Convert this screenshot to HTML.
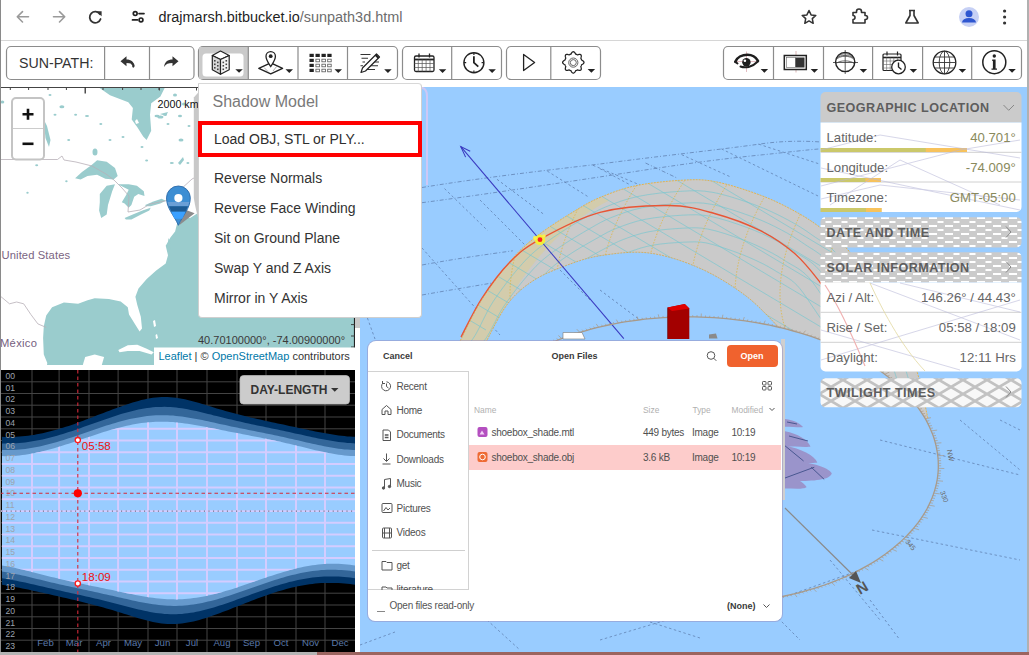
<!DOCTYPE html>
<html><head><meta charset="utf-8">
<style>
html,body{margin:0;padding:0;width:1029px;height:655px;overflow:hidden;background:#fff;font-family:"Liberation Sans",sans-serif;}
.abs{position:absolute}

</style></head><body>
<div class="abs" style="left:0;top:0;width:1029px;height:40px;background:#fff;border-bottom:1px solid #d6d6d6;"></div>
<svg class="abs" style="left:0;top:0" width="1029" height="40">
 <g fill="none" stroke="#9a9a9a" stroke-width="1.6" stroke-linecap="round" stroke-linejoin="round">
  <path d="M28.5 16.8H17.5M22.5 11.6L17.3 16.8L22.5 22"/>
  <path d="M53.5 16.8H64.5M59.5 11.6L64.7 16.8L59.5 22"/>
 </g>
 <g fill="none" stroke="#333" stroke-width="1.8" stroke-linecap="round">
  <path d="M100 14.2A5.6 5.6 0 1 0 100.6 19"/>
 </g>
 <path d="M96.5 11.2L101.6 11.2L101.6 16.2Z" fill="#333"/>
 <g fill="none" stroke="#222" stroke-width="1.7">
  <circle cx="135.2" cy="13.6" r="1.9"/>
  <path d="M139 13.6H144" stroke-linecap="round"/>
  <circle cx="141" cy="19.9" r="1.9"/>
  <path d="M132.5 19.9H137.5" stroke-linecap="round"/>
 </g>
 <text x="158.5" y="21.5" font-size="14.45" fill="#1f1f1f" font-family="Liberation Sans, sans-serif">drajmarsh.bitbucket.io<tspan fill="#6d6d6d">/sunpath3d.html</tspan></text>
 <g fill="none" stroke="#333" stroke-width="1.5" stroke-linejoin="round">
  <path d="M809 10.5L811.1 14.9L815.8 15.4L812.3 18.6L813.2 23.3L809 20.9L804.8 23.3L805.7 18.6L802.2 15.4L806.9 14.9Z"/>
 </g>
 <path d="M853 12.5H856.5V11.5A2.5 2.5 0 0 1 861.5 11.5V12.5H865V15.5H865.5A2 2 0 0 1 865.5 19.5H865V23H853V19.5A2 2 0 0 0 853 15.5Z" fill="none" stroke="#333" stroke-width="1.6" stroke-linejoin="round"/>
 <path d="M909 10.5H915M910 10.5V15.5L905.8 23H918.2L914 15.5V10.5" fill="none" stroke="#333" stroke-width="1.6" stroke-linejoin="round"/>
 <circle cx="969" cy="17" r="10" fill="#c6d0f5"/>
 <circle cx="969" cy="13.8" r="3.5" fill="#2e56d0"/>
 <path d="M962 22.5A7 4.5 0 0 1 976 22.5Z" fill="#2e56d0"/>
 <g fill="#333"><circle cx="1004.6" cy="11" r="1.6"/><circle cx="1004.6" cy="17" r="1.6"/><circle cx="1004.6" cy="23" r="1.6"/></g>
</svg>

<svg class="abs" style="left:0;top:41px" width="1029" height="46">
<g transform="translate(0,-41)">
 <g fill="#fff" stroke="#8c8c8c" stroke-width="1.2">
  <rect x="6.5" y="46.5" width="187.5" height="33" rx="4.5"/>
  <rect x="198.5" y="46.5" width="199" height="33" rx="4.5"/>
  <rect x="402.5" y="46.5" width="99" height="33" rx="4.5"/>
  <rect x="506.5" y="46.5" width="94" height="33" rx="4.5"/>
  <rect x="723.5" y="46.5" width="298" height="33" rx="4.5"/>
 </g>
 <path d="M199.1 47.1H248V79H199.1Z" fill="#cacaca"/>
 <rect x="202.5" y="53.5" width="41" height="23" rx="3.5" fill="#fff"/>
 <g stroke="#8c8c8c" stroke-width="1.2">
  <path d="M104.6 47V79M149.5 47V79M248.3 47V79M298 47V79M347.5 47V79M451.7 47V79M550.8 47V79M773.5 47V79M823.5 47V79M872.6 47V79M922.6 47V79M971.7 47V79"/>
 </g>
 <text x="19" y="67.5" font-size="14.2" fill="#333" font-family="Liberation Sans, sans-serif">SUN-PATH:</text>
 <!-- undo / redo -->
 <path d="M120.5 61.2L126.5 56.2V59.4C131 59.4 134.3 61.5 134.3 66.5C133 63.8 130.6 63.1 126.5 63.1V66.3Z" fill="#333"/>
 <path d="M133.3 66.5C133.6 65.5 133.2 64.3 132 63.6" stroke="#333" stroke-width="2.2" fill="none" stroke-linecap="round"/>
 <path d="M178.5 61.2L172.5 56.2V59.4C168 59.4 164.2 61.8 164.2 67C165.8 64 168.4 63.1 172.5 63.1V66.3Z" fill="#333"/>
 <!-- carets -->
 <g fill="#222">
  <path d="M235.3 69.2H242.8L239.05 72.8Z"/>
  <path d="M285.5 69.3H293L289.25 72.9Z"/>
  <path d="M334.5 69.3H342L338.25 72.9Z"/>
  <path d="M384.2 69.3H391.7L387.95 72.9Z"/>
  <path d="M488.4 69.3H495.9L492.15 72.9Z"/>
  <path d="M438.8 69.3H446.3L442.55 72.9Z"/>
  <path d="M587.6 69.1H595.1L591.35 72.7Z"/>
  <path d="M760.6 69.1H768.1L764.35 72.7Z"/>
  <path d="M810.6 69.1H818.1L814.35 72.7Z"/>
  <path d="M859.6 69.1H867.1L863.35 72.7Z"/>
  <path d="M909.6 69.1H917.1L913.35 72.7Z"/>
  <path d="M958.6 69.1H966.1L962.35 72.7Z"/>
  <path d="M1008.3 69.1H1015.8L1012.05 72.7Z"/>
 </g>
 <!-- building -->
 <g stroke="#222" stroke-width="1.2" stroke-linejoin="round">
  <path d="M212.3 55.5L220.5 51L229.2 55.5L220.5 59.5Z" fill="#fff"/>
  <path d="M212.3 55.5V69.8L220.5 74.2V59.5Z" fill="#d8d8d8"/>
  <path d="M229.2 55.5V69.8L220.5 74.2V59.5Z" fill="#f4f4f4"/>
 </g>
 <g fill="#444">
  <rect x="214" y="60" width="1.6" height="1.6"/><rect x="217" y="61.6" width="1.6" height="1.6"/>
  <rect x="214" y="63.5" width="1.6" height="1.6"/><rect x="217" y="65" width="1.6" height="1.6"/>
  <rect x="214" y="67" width="1.6" height="1.6"/><rect x="217" y="68.5" width="1.6" height="1.6"/>
  <rect x="222.5" y="61.6" width="1.6" height="1.6"/><rect x="225.5" y="60" width="1.6" height="1.6"/>
  <rect x="222.5" y="65" width="1.6" height="1.6"/><rect x="225.5" y="63.5" width="1.6" height="1.6"/>
  <rect x="222.5" y="68.5" width="1.6" height="1.6"/><rect x="225.5" y="67" width="1.6" height="1.6"/>
 </g>
 <!-- pin on map -->
 <path d="M258.8 68.3L270.7 62.8L282.6 68.3L270.7 73.8Z" fill="#fff" stroke="#222" stroke-width="1.4" stroke-linejoin="round"/>
 <path d="M264 67.5L268 71.5M277 66L273 71" stroke="#999" stroke-width="0.8"/>
 <path d="M270.7 66.5C268 62.5 266 60 266 56.3A4.7 4.7 0 0 1 275.4 56.3C275.4 60 273.4 62.5 270.7 66.5Z" fill="#fff" stroke="#222" stroke-width="1.3"/>
 <circle cx="270.7" cy="56.2" r="1.9" fill="#222"/>
 <!-- grid -->
 <g fill="#222">
  <rect x="309.5" y="53.8" width="4.3" height="3.2"/><rect x="315.5" y="53.8" width="4.3" height="3.2"/><rect x="321.5" y="53.8" width="4.3" height="3.2"/><rect x="327.3" y="53.8" width="4.3" height="3.2"/>
  <rect x="309.5" y="58.8" width="4.3" height="3.2"/><rect x="309.5" y="63.8" width="4.3" height="3.2"/><rect x="309.5" y="68.8" width="4.3" height="3.2"/>
 </g>
 <g fill="none" stroke="#555" stroke-width="0.8">
  <rect x="315.9" y="59.2" width="3.5" height="2.6"/><rect x="321.9" y="59.2" width="3.5" height="2.6"/><rect x="327.7" y="59.2" width="3.5" height="2.6"/>
  <rect x="315.9" y="64.2" width="3.5" height="2.6"/><rect x="321.9" y="64.2" width="3.5" height="2.6"/><rect x="327.7" y="64.2" width="3.5" height="2.6"/>
  <rect x="315.9" y="69.2" width="3.5" height="2.6"/><rect x="321.9" y="69.2" width="3.5" height="2.6"/><rect x="327.7" y="69.2" width="3.5" height="2.6"/>
 </g>
 <!-- pencil -->
 <g stroke="#333" stroke-width="1.1">
  <path d="M360.5 54.5H370.5M361.5 58.2H368M362.5 62H365M371 62H379M360.5 65.8H363M369 65.8H378M367 69.5H375"/>
 </g>
 <path d="M361 72.5L362.5 68L376.5 54L379.5 57L365.5 71Z" fill="#fff" stroke="#222" stroke-width="1.2" stroke-linejoin="round"/>
 <path d="M375.5 55L378.5 58" stroke="#222" stroke-width="1.8"/>
 <!-- calendar -->
 <rect x="414.5" y="56" width="19.5" height="15.5" rx="1.5" fill="#fff" stroke="#222" stroke-width="1.3"/>
 <path d="M414.5 59.5H434" stroke="#222" stroke-width="1.8"/>
 <g stroke="#555" stroke-width="0.7"><path d="M414.5 63.5H434M414.5 67.5H434M418.3 59.5V71.5M422.2 59.5V71.5M426.1 59.5V71.5M430 59.5V71.5"/></g>
 <path d="M419 53.5V57.5M429.5 53.5V57.5" stroke="#222" stroke-width="1.3"/>
 <!-- clock -->
 <circle cx="473.9" cy="62.7" r="10" fill="#fff" stroke="#222" stroke-width="1.4"/>
 <path d="M473.9 52.7V55M473.9 70.4V72.7M463.9 62.7H466.2M481.6 62.7H483.9" stroke="#222" stroke-width="1.2"/>
 <path d="M473.9 56.3V62.7L478.3 66.6" stroke="#222" stroke-width="1.8" fill="none"/>
 <!-- play -->
 <path d="M523.6 54.5V70.5L534.6 62.5Z" fill="#fff" stroke="#222" stroke-width="1.3" stroke-linejoin="round"/>
 <!-- gear -->
 <path d="M573.30 51.70 L573.72 51.77 L574.12 51.98 L574.49 52.31 L574.83 52.72 L575.13 53.18 L575.40 53.65 L575.64 54.09 L575.96 54.20 L576.28 54.31 L576.60 54.44 L576.91 54.57 L577.21 54.72 L577.52 54.87 L578.00 54.73 L578.52 54.58 L579.06 54.47 L579.59 54.42 L580.09 54.45 L580.52 54.59 L580.87 54.83 L581.11 55.18 L581.25 55.61 L581.28 56.11 L581.23 56.64 L581.12 57.18 L580.97 57.70 L580.83 58.18 L580.98 58.49 L581.13 58.79 L581.26 59.10 L581.39 59.42 L581.50 59.74 L581.61 60.06 L582.05 60.30 L582.52 60.57 L582.98 60.87 L583.39 61.21 L583.72 61.58 L583.93 61.98 L584.00 62.40 L583.93 62.82 L583.72 63.22 L583.39 63.59 L582.98 63.93 L582.52 64.23 L582.05 64.50 L581.61 64.74 L581.50 65.06 L581.39 65.38 L581.26 65.70 L581.13 66.01 L580.98 66.31 L580.83 66.62 L580.97 67.10 L581.12 67.62 L581.23 68.16 L581.28 68.69 L581.25 69.19 L581.11 69.62 L580.87 69.97 L580.52 70.21 L580.09 70.35 L579.59 70.38 L579.06 70.33 L578.52 70.22 L578.00 70.07 L577.52 69.93 L577.21 70.08 L576.91 70.23 L576.60 70.36 L576.28 70.49 L575.96 70.60 L575.64 70.71 L575.40 71.15 L575.13 71.62 L574.83 72.08 L574.49 72.49 L574.12 72.82 L573.72 73.03 L573.30 73.10 L572.88 73.03 L572.48 72.82 L572.11 72.49 L571.77 72.08 L571.47 71.62 L571.20 71.15 L570.96 70.71 L570.64 70.60 L570.32 70.49 L570.00 70.36 L569.69 70.23 L569.39 70.08 L569.08 69.93 L568.60 70.07 L568.08 70.22 L567.54 70.33 L567.01 70.38 L566.51 70.35 L566.08 70.21 L565.73 69.97 L565.49 69.62 L565.35 69.19 L565.32 68.69 L565.37 68.16 L565.48 67.62 L565.63 67.10 L565.77 66.62 L565.62 66.31 L565.47 66.01 L565.34 65.70 L565.21 65.38 L565.10 65.06 L564.99 64.74 L564.55 64.50 L564.08 64.23 L563.62 63.93 L563.21 63.59 L562.88 63.22 L562.67 62.82 L562.60 62.40 L562.67 61.98 L562.88 61.58 L563.21 61.21 L563.62 60.87 L564.08 60.57 L564.55 60.30 L564.99 60.06 L565.10 59.74 L565.21 59.42 L565.34 59.10 L565.47 58.79 L565.62 58.49 L565.77 58.18 L565.63 57.70 L565.48 57.18 L565.37 56.64 L565.32 56.11 L565.35 55.61 L565.49 55.18 L565.73 54.83 L566.08 54.59 L566.51 54.45 L567.01 54.42 L567.54 54.47 L568.08 54.58 L568.60 54.73 L569.08 54.87 L569.39 54.72 L569.69 54.57 L570.00 54.44 L570.32 54.31 L570.64 54.20 L570.96 54.09 L571.20 53.65 L571.47 53.18 L571.77 52.72 L572.11 52.31 L572.48 51.98 L572.88 51.77Z" fill="#fff" stroke="#222" stroke-width="1.25" stroke-linejoin="round"/>
 <circle cx="573.3" cy="62.6" r="4.6" fill="none" stroke="#555" stroke-width="0.9"/>
 <circle cx="573.3" cy="62.6" r="3" fill="none" stroke="#555" stroke-width="0.9"/>
 <!-- eye -->
 <path d="M746.5 51.5V72M734.5 61.5H758" stroke="#d9a0a8" stroke-width="0.7"/>
 <path d="M735.3 61.8C737 57.5 742 54.8 747.5 54.8C752.5 54.8 756 57.5 758 60.8" fill="none" stroke="#1e1e1e" stroke-width="2.6" stroke-linecap="round"/>
 <path d="M740.5 66.5C745 68.3 752 67.5 757.8 61.5" fill="none" stroke="#1e1e1e" stroke-width="2" stroke-linecap="round"/>
 <path d="M735.3 61.8L737.5 63.5" stroke="#1e1e1e" stroke-width="2" stroke-linecap="round"/>
 <circle cx="746.4" cy="62.3" r="4.2" fill="#1e1e1e"/>
 <circle cx="744.9" cy="60.8" r="1.3" fill="#fff"/>
 <!-- split rect -->
 <path d="M796 51V72.5" stroke="#c99" stroke-width="0.7"/>
 <rect x="784.3" y="55.5" width="22" height="14" fill="#fff" stroke="#222" stroke-width="1.5"/>
 <rect x="786.5" y="57.5" width="9" height="10" fill="#fff" stroke="#666" stroke-width="0.6"/>
 <rect x="795.5" y="57.5" width="9" height="10" fill="#333"/>
 <!-- sphere -->
 <path d="M845.2 50V74M833 62.5H858" stroke="#333" stroke-width="0.8"/>
 <circle cx="845.2" cy="62" r="9.6" fill="none" stroke="#222" stroke-width="1.4"/>
 <path d="M836 60C839 55 851 55 854.5 60M837 58C840 54.5 850 54.5 853.5 58M836.5 63.5C839 60 851 60 854 63.5M838 56C842 53 848 53 852 56" fill="none" stroke="#444" stroke-width="0.8"/>
 <!-- calendar clock -->
 <rect x="883" y="54" width="18" height="16.5" rx="1" fill="#fff" stroke="#222" stroke-width="1.2"/>
 <path d="M883 57.5H901" stroke="#222" stroke-width="1.6"/>
 <g stroke="#666" stroke-width="0.6"><path d="M883 61H901M883 64.5H901M883 68H901M886.6 57.5V70.5M890.2 57.5V70.5M893.8 57.5V70.5M897.4 57.5V70.5"/></g>
 <path d="M887 51.5V55.5M897.5 51.5V55.5" stroke="#222" stroke-width="1.2"/>
 <circle cx="898.5" cy="67" r="6.8" fill="#fff" stroke="#222" stroke-width="1.3"/>
 <path d="M898.5 62.5V67L901.5 69.5" stroke="#222" stroke-width="1.4" fill="none"/>
 <!-- globe -->
 <circle cx="944.5" cy="62.5" r="11.3" fill="#fff" stroke="#222" stroke-width="1.3"/>
 <ellipse cx="944.5" cy="62.5" rx="5.3" ry="11.3" fill="none" stroke="#333" stroke-width="0.9"/>
 <path d="M944.5 51.2V73.8M933.2 62.5H955.8M934.5 57H954.5M934.5 68H954.5" stroke="#333" stroke-width="0.9"/>
 <!-- info -->
 <circle cx="994.3" cy="62.2" r="11.5" fill="#fff" stroke="#222" stroke-width="1.5"/>
 <circle cx="994.3" cy="56" r="1.7" fill="#222"/>
 <path d="M992.2 59.5H995.6V68.4H997V69.8H991.5V68.4H992.9V60.9H992.2Z" fill="#222"/>
</g>
</svg>

<svg class="abs" style="left:0;top:0" width="360" height="368">
 <rect x="1" y="87" width="354" height="278" fill="#fff"/>
 <g fill="#9acccd">
  <!-- Atlantic + Gulf -->
  <path d="M179.9 215L177.5 222.1L175.1 231.6L170.4 237.5L165.7 245.8L168 255.2L165.7 263.5L156.2 270.6L146.7 278.9L138.5 288.4L135.4 296.7L137.3 304.9L140.8 316.8L142 328.6L139.6 331.4L134.9 323.9L129 314.4L127.8 307.3L120.7 301.4L108.9 299L94.7 298.3L87.6 300.2L78.1 303.8L63.9 302.6L52.1 307.3L46.2 315.6L43.8 326.2L43.1 338L43.8 354.6L47.3 362.9L47 365H355V200L198 200L198 213L190 218L183 216Z"/>
  <!-- Hudson/James Bay -->
  <path d="M98.5 87.3L110 95.3L128.3 102.2L132.9 107.9L131.7 119.4L137.5 127.4L143.2 136.5L146.6 140L151.2 130.8L150 114.8L151.2 103.3L160.4 96.5L165 87.3Z"/>
  <!-- Superior -->
  <path d="M75.1 178.2L82 172L91.6 165.1L97.1 160.3L106.7 161.7L115 167.9L117.7 176.1L113.6 179.5L105.3 178.8L97.1 174.7L87.5 176.1L80.6 179.5Z"/>
  <!-- Michigan -->
  <path d="M99.8 194L106.7 185.7L115 184.3L112.2 191.2L108 205L106.7 214.6L101.2 218L99.1 210.4L99.8 202.2Z"/>
  <!-- Huron -->
  <path d="M117.7 184.3L128.7 184.3L136.9 185.7L143.8 191.2L144.5 196L138.3 194L134.2 196.7L131.4 205L128.7 207.7L124.6 203.6L121.8 202.2L126 195.3L128.7 189.8L123.2 187.1Z"/>
  <!-- Erie -->
  <path d="M124.6 218L132.8 214.6L142.4 210.4L150.7 207.7L149.3 210.4L141 214.6L131.4 219.4L125.9 219.4Z"/>
  <!-- Ontario -->
  <path d="M145.2 204.9L153.4 201.5L161.6 198.8L165.8 200.8L160.3 203.6L150.7 206.3L145.9 206.3Z"/>
  <path d="M168.5 238L171 244L169.5 252L167.5 247Z"/><ellipse cx="95" cy="152" rx="2.5" ry="3.5"/><ellipse cx="2.3" cy="102" rx="2" ry="1.5"/><ellipse cx="61.9" cy="106.8" rx="2.5" ry="1.5"/><ellipse cx="55" cy="114.8" rx="1.5" ry="1"/><ellipse cx="87" cy="116" rx="2" ry="1"/><ellipse cx="100.8" cy="124" rx="1.5" ry="1"/><ellipse cx="75.6" cy="114.8" rx="1.5" ry="1"/><ellipse cx="160.4" cy="117" rx="3" ry="1.5"/><ellipse cx="165" cy="114.8" rx="2" ry="1"/><ellipse cx="181" cy="140" rx="2.5" ry="1.5"/><ellipse cx="146.6" cy="160.6" rx="1.5" ry="1"/><ellipse cx="171.8" cy="162.9" rx="2" ry="1"/><ellipse cx="187.9" cy="162.9" rx="1.5" ry="1"/><ellipse cx="142" cy="146.9" rx="1.5" ry="1"/><ellipse cx="68.7" cy="140" rx="1.5" ry="1"/><ellipse cx="36.7" cy="165.2" rx="1.5" ry="1"/><ellipse cx="66.4" cy="181.2" rx="1.2" ry="1"/><ellipse cx="27.5" cy="192.7" rx="1.2" ry="1"/><ellipse cx="175" cy="95" rx="2" ry="1.5"/><ellipse cx="184" cy="104" rx="2" ry="1.5"/><ellipse cx="180" cy="116" rx="2" ry="1.2"/><ellipse cx="157" cy="116" rx="2.5" ry="1.2"/><ellipse cx="168" cy="124" rx="1.5" ry="1"/><ellipse cx="189" cy="126" rx="1.5" ry="1"/><ellipse cx="123" cy="137" rx="1.5" ry="1"/><ellipse cx="110" cy="140" rx="1.5" ry="1"/><ellipse cx="50" cy="95" rx="1.5" ry="1"/><ellipse cx="30" cy="100" rx="1" ry="1"/>
  <path d="M43.5 119L47 126L50.5 140L49 147L45.5 138Z"/>
  <path d="M178 163L183 157L184 160L180 165Z"/>
  <path d="M160 114L168 112L166 116Z"/>
 </g>
 <g fill="#fff">
  <path d="M82.8 365L85.2 357L94.7 354.6L104.1 357L101.8 365Z"/>
  <path d="M118.3 349.9L127.8 345.2L137.3 344.7L146.7 348.7L153.8 352.3L151.5 354.6L139.6 351.1L127.8 351.1L119.5 352.3Z"/>
  <path d="M135 121L137 119L139 123L136 124Z"/>
  <path d="M153 321L155 320L156 326L154 327Z"/><path d="M155.5 335L157 334L158 338L156 339Z"/>
 </g>
 <g fill="none" stroke="#b8b0b8" stroke-width="0.8">
  <path d="M1 159.5H57.5L62 156L64 160L76 162L92 166L106 174L114 180L122 188L129 196L128 212L140 210L150 204L165.8 200.8L180 190L192 179L198 176"/>
  <path d="M1 296.7L9.5 303.8L16.6 302L23.7 303.8L30.8 314.4L37.9 323.9L46.2 327.4"/>
 </g>
 <!-- top ruler -->
 <path d="M1 87.5H355" stroke="#444" stroke-width="1"/>
 <path d="M10.3 87.5V90M28.6 87.5V90M48 87.5V90M66.4 87.5V90M103 87.5V90M122.6 87.5V90M141 87.5V90M159 87.5V90M159.4 87.5V90.5M196.5 87.5V90.5" stroke="#444" stroke-width="1"/>
 <path d="M85.2 87.5V93.5" stroke="#222" stroke-width="1.2"/>
 <!-- right ruler -->
 <path d="M354.5 318V348" stroke="#222" stroke-width="1.2"/>
 <path d="M354.5 348V365" stroke="#c4c4c4" stroke-width="1"/>
 <path d="M351 324.6H355M351 336H355M351 347H355M351 357.7H355" stroke="#333" stroke-width="0.9"/>
 
 <!-- zoom control -->
 <rect x="12" y="98" width="32" height="61.5" rx="4" fill="#fff" stroke="#c4c4c4" stroke-width="2"/>
 <path d="M13 128.5H43" stroke="#ccc" stroke-width="1"/>
 <path d="M22.5 114.2H33.5M28 108.7V119.7" stroke="#111" stroke-width="2.6"/>
 <path d="M22.5 143.8H33.5" stroke="#111" stroke-width="2.6"/>
 <!-- labels -->
 <text x="1.5" y="258.5" font-size="11.2" fill="#7a6482" letter-spacing="0.12" font-family="Liberation Sans, sans-serif">United States</text>
 <text x="0" y="346.5" font-size="11.2" fill="#74607e" letter-spacing="0.3" font-family="Liberation Sans, sans-serif">México</text>
 <!-- marker -->
 <path d="M183.6 209L194.6 213.2L179.5 224.9Z" fill="#8c8c8c"/>
 <path d="M178.4 225.3C174 215 166.5 208.5 166.5 197.9A11.9 11.9 0 0 1 190.3 197.9C190.3 208.5 182.8 215 178.4 225.3Z" fill="#3d8ed3" stroke="#2d6aa8" stroke-width="0.9"/>
 <path d="M167.6 202H189.2L188 206.3H169Z" fill="#6a9fd6"/>
 <path d="M169 206.3H188L185.5 211.8H171.4Z" fill="#1d5b94"/>
 <path d="M171.4 211.8H185.5L182.3 218.7H174.5Z" fill="#3aa0ff"/>
 <circle cx="178.4" cy="198.1" r="4.1" fill="#fff"/>
 <!-- coords -->
 <text x="198" y="343.5" font-size="11" fill="#3a3a3a" stroke="#fff" stroke-width="0" font-family="Liberation Sans, sans-serif">40.70100000°, -74.00900000°</text>
 <rect x="154" y="347.5" width="201" height="18" fill="#fff"/>
 <text x="158.5" y="360" font-size="11" fill="#333" font-family="Liberation Sans, sans-serif"><tspan fill="#0078a8">Leaflet</tspan> | © <tspan fill="#0078a8">OpenStreetMap</tspan> contributors</text>
 <path d="M198.7 92V220C197 214 195 206 193.8 198V97.4Z" fill="#c8c8c8"/>
 <text x="157.6" y="107.5" font-size="10.7" fill="#111" font-family="Liberation Sans, sans-serif">2000 km</text>
</svg>

<svg width="357" height="285" style="position:absolute;left:0;top:368px">
<rect x="1" y="2" width="355" height="283" fill="#000"/>
<path d="M0 13.8H356M0 25.5H356M0 37.2H356M0 49.0H356M0 60.8H356M0 72.5H356M0 84.2H356M0 96.0H356M0 107.8H356M0 119.5H356M0 131.2H356M0 143.0H356M0 154.8H356M0 166.5H356M0 178.2H356M0 190.0H356M0 201.8H356M0 213.5H356M0 225.2H356M0 237.0H356M0 248.8H356M0 260.5H356M0 272.2H356M32.0 2V285M59.1 2V285M89.0 2V285M118.1 2V285M148.0 2V285M177.0 2V285M207.0 2V285M237.0 2V285M266.0 2V285M296.0 2V285M325.0 2V285" stroke="#444" stroke-width="1" fill="none"/>
<polygon points="2.0,68.8 4.9,68.9 7.8,69.0 10.7,69.0 13.6,68.9 16.5,68.8 19.4,68.6 22.3,68.3 25.2,68.0 28.1,67.7 31.0,67.3 33.9,66.9 36.8,66.3 39.7,65.8 42.6,65.2 45.5,64.5 48.4,63.8 51.3,63.1 54.2,62.3 57.1,61.5 60.0,60.6 62.9,59.7 65.8,58.8 68.7,57.9 71.6,56.9 74.5,55.9 77.4,54.8 80.3,53.8 83.2,52.7 86.1,51.6 89.0,50.5 91.9,49.4 94.8,48.3 97.7,47.1 100.6,46.0 103.5,44.9 106.4,43.8 109.4,42.7 112.3,41.6 115.2,40.5 118.1,39.4 121.0,38.4 123.9,37.4 126.8,36.4 129.7,35.4 132.6,34.5 135.5,33.7 138.4,32.9 141.3,32.1 144.2,31.4 147.1,30.8 150.0,30.3 152.9,29.8 155.8,29.5 158.7,29.2 161.6,29.1 164.5,29.0 167.4,29.0 170.3,29.2 173.2,29.4 176.1,29.8 179.0,30.2 181.9,30.7 184.8,31.3 187.7,32.0 190.6,32.7 193.5,33.4 196.4,34.3 199.3,35.1 202.2,36.0 205.1,36.8 208.0,37.7 210.9,38.6 213.8,39.5 216.7,40.4 219.6,41.2 222.5,42.1 225.4,42.9 228.3,43.7 231.2,44.5 234.1,45.3 237.0,46.1 239.9,46.8 242.8,47.6 245.7,48.3 248.6,49.0 251.5,49.7 254.4,50.3 257.3,51.0 260.2,51.6 263.1,52.3 266.0,52.9 268.9,53.5 271.8,54.2 274.7,54.8 277.6,55.4 280.5,56.0 283.4,56.6 286.3,57.3 289.2,57.9 292.1,58.5 295.0,59.1 297.9,59.8 300.8,60.4 303.7,61.0 306.6,61.6 309.5,62.2 312.4,62.8 315.3,63.4 318.2,64.0 321.2,64.6 324.1,65.1 327.0,65.6 329.9,66.1 332.8,66.6 335.7,67.0 338.6,67.4 341.5,67.8 344.4,68.1 347.3,68.4 350.2,68.6 353.1,68.8 355.0,68.8 355.0,216.7 353.1,216.5 350.2,216.1 347.3,215.8 344.4,215.5 341.5,215.3 338.6,215.1 335.7,215.0 332.8,214.9 329.9,214.9 327.0,214.9 324.1,215.0 321.2,215.1 318.2,215.3 315.3,215.6 312.4,215.9 309.5,216.3 306.6,216.7 303.7,217.2 300.8,217.7 297.9,218.3 295.0,218.9 292.1,219.6 289.2,220.3 286.3,221.1 283.4,221.9 280.5,222.7 277.6,223.6 274.7,224.5 271.8,225.5 268.9,226.4 266.0,227.4 263.1,228.5 260.2,229.5 257.3,230.6 254.4,231.7 251.5,232.8 248.6,233.9 245.7,235.1 242.8,236.2 239.9,237.4 237.0,238.5 234.1,239.6 231.2,240.8 228.3,241.9 225.4,243.0 222.5,244.1 219.6,245.2 216.7,246.3 213.8,247.3 210.9,248.3 208.0,249.3 205.1,250.2 202.2,251.1 199.3,251.9 196.4,252.7 193.5,253.4 190.6,254.0 187.7,254.6 184.8,255.1 181.9,255.5 179.0,255.8 176.1,256.0 173.2,256.1 170.3,256.0 167.4,255.9 164.5,255.7 161.6,255.4 158.7,255.0 155.8,254.5 152.9,253.9 150.0,253.3 147.1,252.6 144.2,251.8 141.3,251.0 138.4,250.2 135.5,249.3 132.6,248.4 129.7,247.5 126.8,246.6 123.9,245.7 121.0,244.8 118.1,243.9 115.2,243.0 112.3,242.1 109.4,241.2 106.4,240.4 103.5,239.6 100.6,238.7 97.7,237.9 94.8,237.2 91.9,236.4 89.0,235.7 86.1,234.9 83.2,234.2 80.3,233.5 77.4,232.8 74.5,232.1 71.6,231.5 68.7,230.8 65.8,230.1 62.9,229.5 60.0,228.8 57.1,228.1 54.2,227.5 51.3,226.8 48.4,226.1 45.5,225.5 42.6,224.8 39.7,224.2 36.8,223.5 33.9,222.9 31.0,222.2 28.1,221.6 25.2,221.0 22.3,220.4 19.4,219.8 16.5,219.2 13.6,218.7 10.7,218.1 7.8,217.6 4.9,217.2 2.0,216.7" fill="#003366"/>
<polygon points="2.0,75.4 4.9,75.4 7.8,75.5 10.7,75.4 13.6,75.3 16.5,75.2 19.4,75.0 22.3,74.7 25.2,74.4 28.1,74.0 31.0,73.6 33.9,73.1 36.8,72.6 39.7,72.0 42.6,71.4 45.5,70.8 48.4,70.1 51.3,69.3 54.2,68.5 57.1,67.7 60.0,66.8 62.9,66.0 65.8,65.1 68.7,64.1 71.6,63.2 74.5,62.2 77.4,61.2 80.3,60.2 83.2,59.1 86.1,58.1 89.0,57.1 91.9,56.0 94.8,55.0 97.7,53.9 100.6,52.9 103.5,51.9 106.4,50.9 109.4,49.9 112.3,48.9 115.2,48.0 118.1,47.0 121.0,46.1 123.9,45.3 126.8,44.5 129.7,43.7 132.6,42.9 135.5,42.2 138.4,41.6 141.3,41.0 144.2,40.5 147.1,40.1 150.0,39.7 152.9,39.3 155.8,39.1 158.7,38.9 161.6,38.9 164.5,38.8 167.4,38.9 170.3,39.0 173.2,39.3 176.1,39.5 179.0,39.9 181.9,40.3 184.8,40.8 187.7,41.3 190.6,41.9 193.5,42.5 196.4,43.1 199.3,43.8 202.2,44.5 205.1,45.2 208.0,45.9 210.9,46.6 213.8,47.4 216.7,48.1 219.6,48.8 222.5,49.5 225.4,50.2 228.3,50.9 231.2,51.6 234.1,52.3 237.0,53.0 239.9,53.6 242.8,54.3 245.7,54.9 248.6,55.5 251.5,56.2 254.4,56.8 257.3,57.4 260.2,58.0 263.1,58.6 266.0,59.2 268.9,59.8 271.8,60.4 274.7,61.0 277.6,61.6 280.5,62.2 283.4,62.8 286.3,63.5 289.2,64.1 292.1,64.7 295.0,65.4 297.9,66.0 300.8,66.6 303.7,67.3 306.6,67.9 309.5,68.6 312.4,69.2 315.3,69.8 318.2,70.4 321.2,71.0 324.1,71.6 327.0,72.1 329.9,72.6 332.8,73.1 335.7,73.5 338.6,73.9 341.5,74.3 344.4,74.6 347.3,74.9 350.2,75.1 353.1,75.3 355.0,75.4 355.0,210.2 353.1,210.0 350.2,209.6 347.3,209.3 344.4,209.0 341.5,208.8 338.6,208.6 335.7,208.5 332.8,208.4 329.9,208.4 327.0,208.5 324.1,208.6 321.2,208.7 318.2,208.9 315.3,209.2 312.4,209.6 309.5,210.0 306.6,210.4 303.7,210.9 300.8,211.4 297.9,212.0 295.0,212.7 292.1,213.4 289.2,214.1 286.3,214.9 283.4,215.7 280.5,216.5 277.6,217.4 274.7,218.3 271.8,219.2 268.9,220.2 266.0,221.2 263.1,222.2 260.2,223.2 257.3,224.2 254.4,225.3 251.5,226.3 248.6,227.4 245.7,228.4 242.8,229.5 239.9,230.6 237.0,231.6 234.1,232.7 231.2,233.7 228.3,234.7 225.4,235.7 222.5,236.7 219.6,237.6 216.7,238.5 213.8,239.4 210.9,240.3 208.0,241.1 205.1,241.8 202.2,242.5 199.3,243.2 196.4,243.8 193.5,244.4 190.6,244.8 187.7,245.3 184.8,245.6 181.9,245.9 179.0,246.1 176.1,246.2 173.2,246.2 170.3,246.2 167.4,246.1 164.5,245.9 161.6,245.6 158.7,245.3 155.8,244.9 152.9,244.4 150.0,243.9 147.1,243.3 144.2,242.7 141.3,242.1 138.4,241.4 135.5,240.7 132.6,240.0 129.7,239.2 126.8,238.5 123.9,237.7 121.0,237.0 118.1,236.2 115.2,235.5 112.3,234.7 109.4,234.0 106.4,233.3 103.5,232.5 100.6,231.8 97.7,231.1 94.8,230.4 91.9,229.8 89.0,229.1 86.1,228.4 83.2,227.8 80.3,227.1 77.4,226.5 74.5,225.8 71.6,225.2 68.7,224.5 65.8,223.9 62.9,223.2 60.0,222.6 57.1,221.9 54.2,221.3 51.3,220.6 48.4,219.9 45.5,219.3 42.6,218.6 39.7,217.9 36.8,217.3 33.9,216.6 31.0,215.9 28.1,215.3 25.2,214.6 22.3,214.0 19.4,213.4 16.5,212.8 13.6,212.2 10.7,211.7 7.8,211.2 4.9,210.7 2.0,210.2" fill="#336699"/>
<polygon points="2.0,82.1 4.9,82.1 7.8,82.1 10.7,82.1 13.6,82.0 16.5,81.8 19.4,81.6 22.3,81.3 25.2,80.9 28.1,80.5 31.0,80.0 33.9,79.5 36.8,79.0 39.7,78.4 42.6,77.7 45.5,77.0 48.4,76.3 51.3,75.6 54.2,74.7 57.1,73.9 60.0,73.1 62.9,72.2 65.8,71.3 68.7,70.3 71.6,69.4 74.5,68.4 77.4,67.4 80.3,66.4 83.2,65.4 86.1,64.4 89.0,63.4 91.9,62.5 94.8,61.5 97.7,60.5 100.6,59.5 103.5,58.6 106.4,57.6 109.4,56.7 112.3,55.8 115.2,54.9 118.1,54.1 121.0,53.3 123.9,52.5 126.8,51.8 129.7,51.1 132.6,50.5 135.5,49.9 138.4,49.4 141.3,48.9 144.2,48.4 147.1,48.1 150.0,47.8 152.9,47.5 155.8,47.3 158.7,47.2 161.6,47.2 164.5,47.2 167.4,47.3 170.3,47.4 173.2,47.6 176.1,47.9 179.0,48.2 181.9,48.5 184.8,48.9 187.7,49.4 190.6,49.9 193.5,50.4 196.4,50.9 199.3,51.5 202.2,52.1 205.1,52.7 208.0,53.3 210.9,54.0 213.8,54.6 216.7,55.2 219.6,55.9 222.5,56.5 225.4,57.1 228.3,57.7 231.2,58.4 234.1,59.0 237.0,59.6 239.9,60.2 242.8,60.8 245.7,61.3 248.6,61.9 251.5,62.5 254.4,63.1 257.3,63.7 260.2,64.2 263.1,64.8 266.0,65.4 268.9,66.0 271.8,66.6 274.7,67.2 277.6,67.8 280.5,68.4 283.4,69.1 286.3,69.7 289.2,70.4 292.1,71.0 295.0,71.7 297.9,72.3 300.8,73.0 303.7,73.7 306.6,74.4 309.5,75.0 312.4,75.7 315.3,76.3 318.2,77.0 321.2,77.6 324.1,78.2 327.0,78.8 329.9,79.3 332.8,79.8 335.7,80.2 338.6,80.7 341.5,81.0 344.4,81.4 347.3,81.6 350.2,81.8 353.1,82.0 355.0,82.1 355.0,203.5 353.1,203.2 350.2,202.8 347.3,202.5 344.4,202.2 341.5,202.0 338.6,201.9 335.7,201.7 332.8,201.7 329.9,201.7 327.0,201.8 324.1,201.9 321.2,202.1 318.2,202.4 315.3,202.7 312.4,203.1 309.5,203.5 306.6,204.0 303.7,204.5 300.8,205.1 297.9,205.7 295.0,206.4 292.1,207.1 289.2,207.8 286.3,208.6 283.4,209.4 280.5,210.3 277.6,211.2 274.7,212.1 271.8,213.0 268.9,214.0 266.0,214.9 263.1,215.9 260.2,216.9 257.3,217.9 254.4,219.0 251.5,220.0 248.6,221.0 245.7,222.0 242.8,223.0 239.9,224.0 237.0,225.0 234.1,226.0 231.2,227.0 228.3,227.9 225.4,228.8 222.5,229.7 219.6,230.6 216.7,231.4 213.8,232.2 210.9,232.9 208.0,233.6 205.1,234.3 202.2,234.9 199.3,235.5 196.4,236.0 193.5,236.4 190.6,236.8 187.7,237.2 184.8,237.4 181.9,237.7 179.0,237.8 176.1,237.9 173.2,237.9 170.3,237.8 167.4,237.7 164.5,237.5 161.6,237.3 158.7,237.0 155.8,236.6 152.9,236.2 150.0,235.8 147.1,235.3 144.2,234.8 141.3,234.2 138.4,233.7 135.5,233.0 132.6,232.4 129.7,231.8 126.8,231.1 123.9,230.5 121.0,229.8 118.1,229.2 115.2,228.5 112.3,227.8 109.4,227.2 106.4,226.5 103.5,225.9 100.6,225.2 97.7,224.6 94.8,224.0 91.9,223.3 89.0,222.7 86.1,222.1 83.2,221.5 80.3,220.8 77.4,220.2 74.5,219.6 71.6,219.0 68.7,218.3 65.8,217.7 62.9,217.0 60.0,216.4 57.1,215.7 54.2,215.0 51.3,214.4 48.4,213.7 45.5,213.0 42.6,212.3 39.7,211.6 36.8,210.9 33.9,210.2 31.0,209.5 28.1,208.8 25.2,208.1 22.3,207.5 19.4,206.8 16.5,206.2 13.6,205.6 10.7,205.0 7.8,204.5 4.9,204.0 2.0,203.5" fill="#6699cc"/>
<polygon points="2.0,88.1 4.9,88.2 7.8,88.1 10.7,88.0 13.6,87.9 16.5,87.7 19.4,87.4 22.3,87.1 25.2,86.7 28.1,86.2 31.0,85.7 33.9,85.2 36.8,84.6 39.7,84.0 42.6,83.3 45.5,82.6 48.4,81.8 51.3,81.0 54.2,80.2 57.1,79.3 60.0,78.4 62.9,77.5 65.8,76.6 68.7,75.7 71.6,74.7 74.5,73.7 77.4,72.8 80.3,71.8 83.2,70.8 86.1,69.8 89.0,68.9 91.9,67.9 94.8,66.9 97.7,66.0 100.6,65.0 103.5,64.1 106.4,63.2 109.4,62.3 112.3,61.5 115.2,60.7 118.1,59.9 121.0,59.2 123.9,58.4 126.8,57.8 129.7,57.2 132.6,56.6 135.5,56.0 138.4,55.6 141.3,55.1 144.2,54.8 147.1,54.4 150.0,54.2 152.9,54.0 155.8,53.8 158.7,53.7 161.6,53.7 164.5,53.7 167.4,53.8 170.3,53.9 173.2,54.1 176.1,54.4 179.0,54.7 181.9,55.0 184.8,55.4 187.7,55.8 190.6,56.2 193.5,56.7 196.4,57.2 199.3,57.7 202.2,58.2 205.1,58.8 208.0,59.4 210.9,59.9 213.8,60.5 216.7,61.1 219.6,61.7 222.5,62.2 225.4,62.8 228.3,63.4 231.2,64.0 234.1,64.5 237.0,65.1 239.9,65.6 242.8,66.2 245.7,66.8 248.6,67.3 251.5,67.9 254.4,68.4 257.3,69.0 260.2,69.6 263.1,70.2 266.0,70.7 268.9,71.3 271.8,71.9 274.7,72.6 277.6,73.2 280.5,73.8 283.4,74.5 286.3,75.2 289.2,75.8 292.1,76.5 295.0,77.2 297.9,77.9 300.8,78.6 303.7,79.3 306.6,80.1 309.5,80.8 312.4,81.5 315.3,82.2 318.2,82.8 321.2,83.5 324.1,84.1 327.0,84.7 329.9,85.3 332.8,85.8 335.7,86.3 338.6,86.7 341.5,87.1 344.4,87.4 347.3,87.7 350.2,87.9 353.1,88.1 355.0,88.1 355.0,197.5 353.1,197.2 350.2,196.8 347.3,196.4 344.4,196.2 341.5,196.0 338.6,195.8 335.7,195.7 332.8,195.7 329.9,195.7 327.0,195.8 324.1,196.0 321.2,196.2 318.2,196.5 315.3,196.9 312.4,197.3 309.5,197.8 306.6,198.3 303.7,198.8 300.8,199.5 297.9,200.1 295.0,200.8 292.1,201.6 289.2,202.3 286.3,203.2 283.4,204.0 280.5,204.9 277.6,205.8 274.7,206.7 271.8,207.7 268.9,208.6 266.0,209.6 263.1,210.6 260.2,211.6 257.3,212.6 254.4,213.6 251.5,214.6 248.6,215.6 245.7,216.6 242.8,217.6 239.9,218.6 237.0,219.5 234.1,220.5 231.2,221.4 228.3,222.3 225.4,223.1 222.5,224.0 219.6,224.8 216.7,225.5 213.8,226.3 210.9,227.0 208.0,227.6 205.1,228.2 202.2,228.8 199.3,229.3 196.4,229.7 193.5,230.1 190.6,230.5 187.7,230.8 184.8,231.0 181.9,231.2 179.0,231.3 176.1,231.4 173.2,231.3 170.3,231.3 167.4,231.2 164.5,231.0 161.6,230.8 158.7,230.5 155.8,230.2 152.9,229.8 150.0,229.4 147.1,229.0 144.2,228.5 141.3,228.0 138.4,227.4 135.5,226.9 132.6,226.3 129.7,225.8 126.8,225.2 123.9,224.6 121.0,224.0 118.1,223.4 115.2,222.8 112.3,222.1 109.4,221.5 106.4,220.9 103.5,220.3 100.6,219.7 97.7,219.1 94.8,218.5 91.9,217.9 89.0,217.3 86.1,216.7 83.2,216.1 80.3,215.5 77.4,214.9 74.5,214.2 71.6,213.6 68.7,213.0 65.8,212.3 62.9,211.7 60.0,211.0 57.1,210.3 54.2,209.6 51.3,208.9 48.4,208.2 45.5,207.5 42.6,206.7 39.7,206.0 36.8,205.3 33.9,204.5 31.0,203.8 28.1,203.1 25.2,202.3 22.3,201.6 19.4,200.9 16.5,200.3 13.6,199.6 10.7,199.0 7.8,198.5 4.9,197.9 2.0,197.5" fill="#99ccff"/>
<clipPath id="dayclip"><polygon points="2.0,88.1 4.9,88.2 7.8,88.1 10.7,88.0 13.6,87.9 16.5,87.7 19.4,87.4 22.3,87.1 25.2,86.7 28.1,86.2 31.0,85.7 33.9,85.2 36.8,84.6 39.7,84.0 42.6,83.3 45.5,82.6 48.4,81.8 51.3,81.0 54.2,80.2 57.1,79.3 60.0,78.4 62.9,77.5 65.8,76.6 68.7,75.7 71.6,74.7 74.5,73.7 77.4,72.8 80.3,71.8 83.2,70.8 86.1,69.8 89.0,68.9 91.9,67.9 94.8,66.9 97.7,66.0 100.6,65.0 103.5,64.1 106.4,63.2 109.4,62.3 112.3,61.5 115.2,60.7 118.1,59.9 121.0,59.2 123.9,58.4 126.8,57.8 129.7,57.2 132.6,56.6 135.5,56.0 138.4,55.6 141.3,55.1 144.2,54.8 147.1,54.4 150.0,54.2 152.9,54.0 155.8,53.8 158.7,53.7 161.6,53.7 164.5,53.7 167.4,53.8 170.3,53.9 173.2,54.1 176.1,54.4 179.0,54.7 181.9,55.0 184.8,55.4 187.7,55.8 190.6,56.2 193.5,56.7 196.4,57.2 199.3,57.7 202.2,58.2 205.1,58.8 208.0,59.4 210.9,59.9 213.8,60.5 216.7,61.1 219.6,61.7 222.5,62.2 225.4,62.8 228.3,63.4 231.2,64.0 234.1,64.5 237.0,65.1 239.9,65.6 242.8,66.2 245.7,66.8 248.6,67.3 251.5,67.9 254.4,68.4 257.3,69.0 260.2,69.6 263.1,70.2 266.0,70.7 268.9,71.3 271.8,71.9 274.7,72.6 277.6,73.2 280.5,73.8 283.4,74.5 286.3,75.2 289.2,75.8 292.1,76.5 295.0,77.2 297.9,77.9 300.8,78.6 303.7,79.3 306.6,80.1 309.5,80.8 312.4,81.5 315.3,82.2 318.2,82.8 321.2,83.5 324.1,84.1 327.0,84.7 329.9,85.3 332.8,85.8 335.7,86.3 338.6,86.7 341.5,87.1 344.4,87.4 347.3,87.7 350.2,87.9 353.1,88.1 355.0,88.1 355.0,197.5 353.1,197.2 350.2,196.8 347.3,196.4 344.4,196.2 341.5,196.0 338.6,195.8 335.7,195.7 332.8,195.7 329.9,195.7 327.0,195.8 324.1,196.0 321.2,196.2 318.2,196.5 315.3,196.9 312.4,197.3 309.5,197.8 306.6,198.3 303.7,198.8 300.8,199.5 297.9,200.1 295.0,200.8 292.1,201.6 289.2,202.3 286.3,203.2 283.4,204.0 280.5,204.9 277.6,205.8 274.7,206.7 271.8,207.7 268.9,208.6 266.0,209.6 263.1,210.6 260.2,211.6 257.3,212.6 254.4,213.6 251.5,214.6 248.6,215.6 245.7,216.6 242.8,217.6 239.9,218.6 237.0,219.5 234.1,220.5 231.2,221.4 228.3,222.3 225.4,223.1 222.5,224.0 219.6,224.8 216.7,225.5 213.8,226.3 210.9,227.0 208.0,227.6 205.1,228.2 202.2,228.8 199.3,229.3 196.4,229.7 193.5,230.1 190.6,230.5 187.7,230.8 184.8,231.0 181.9,231.2 179.0,231.3 176.1,231.4 173.2,231.3 170.3,231.3 167.4,231.2 164.5,231.0 161.6,230.8 158.7,230.5 155.8,230.2 152.9,229.8 150.0,229.4 147.1,229.0 144.2,228.5 141.3,228.0 138.4,227.4 135.5,226.9 132.6,226.3 129.7,225.8 126.8,225.2 123.9,224.6 121.0,224.0 118.1,223.4 115.2,222.8 112.3,222.1 109.4,221.5 106.4,220.9 103.5,220.3 100.6,219.7 97.7,219.1 94.8,218.5 91.9,217.9 89.0,217.3 86.1,216.7 83.2,216.1 80.3,215.5 77.4,214.9 74.5,214.2 71.6,213.6 68.7,213.0 65.8,212.3 62.9,211.7 60.0,211.0 57.1,210.3 54.2,209.6 51.3,208.9 48.4,208.2 45.5,207.5 42.6,206.7 39.7,206.0 36.8,205.3 33.9,204.5 31.0,203.8 28.1,203.1 25.2,202.3 22.3,201.6 19.4,200.9 16.5,200.3 13.6,199.6 10.7,199.0 7.8,198.5 4.9,197.9 2.0,197.5"/></clipPath>
<path clip-path="url(#dayclip)" d="M0 13.8H356M0 25.5H356M0 37.2H356M0 49.0H356M0 60.8H356M0 72.5H356M0 84.2H356M0 96.0H356M0 107.8H356M0 119.5H356M0 131.2H356M0 154.8H356M0 166.5H356M0 178.2H356M0 190.0H356M0 201.8H356M0 213.5H356M0 225.2H356M0 237.0H356M0 248.8H356M0 260.5H356M0 272.2H356M32.0 0V285M59.1 0V285M89.0 0V285M118.1 0V285M148.0 0V285M177.0 0V285M207.0 0V285M237.0 0V285M266.0 0V285M296.0 0V285M325.0 0V285" stroke="#d4ccff" stroke-width="2" fill="none"/>
<text x="5.6" y="10.9" font-size="8.6" fill="#9ca3ae" font-family="Liberation Sans, sans-serif">00</text>
<text x="5.6" y="22.6" font-size="8.6" fill="#9ca3ae" font-family="Liberation Sans, sans-serif">01</text>
<text x="5.6" y="34.4" font-size="8.6" fill="#9ca3ae" font-family="Liberation Sans, sans-serif">02</text>
<text x="5.6" y="46.1" font-size="8.6" fill="#9ca3ae" font-family="Liberation Sans, sans-serif">03</text>
<text x="5.6" y="57.9" font-size="8.6" fill="#9ca3ae" font-family="Liberation Sans, sans-serif">04</text>
<text x="5.6" y="69.6" font-size="8.6" fill="#9ca3ae" font-family="Liberation Sans, sans-serif">05</text>
<text x="5.6" y="81.4" font-size="8.6" fill="#9ca3ae" font-family="Liberation Sans, sans-serif">06</text>
<text x="5.6" y="93.1" font-size="8.6" fill="#9ca3ae" font-family="Liberation Sans, sans-serif">07</text>
<text x="5.6" y="104.9" font-size="8.6" fill="#9ca3ae" font-family="Liberation Sans, sans-serif">08</text>
<text x="5.6" y="116.6" font-size="8.6" fill="#9ca3ae" font-family="Liberation Sans, sans-serif">09</text>
<text x="5.6" y="128.4" font-size="8.6" fill="#9ca3ae" font-family="Liberation Sans, sans-serif">10</text>
<text x="5.6" y="140.1" font-size="8.6" fill="#9ca3ae" font-family="Liberation Sans, sans-serif">11</text>
<text x="5.6" y="151.9" font-size="8.6" fill="#9ca3ae" font-family="Liberation Sans, sans-serif">12</text>
<text x="5.6" y="163.6" font-size="8.6" fill="#9ca3ae" font-family="Liberation Sans, sans-serif">13</text>
<text x="5.6" y="175.4" font-size="8.6" fill="#9ca3ae" font-family="Liberation Sans, sans-serif">14</text>
<text x="5.6" y="187.1" font-size="8.6" fill="#9ca3ae" font-family="Liberation Sans, sans-serif">15</text>
<text x="5.6" y="198.9" font-size="8.6" fill="#9ca3ae" font-family="Liberation Sans, sans-serif">16</text>
<text x="5.6" y="210.6" font-size="8.6" fill="#9ca3ae" font-family="Liberation Sans, sans-serif">17</text>
<text x="5.6" y="222.4" font-size="8.6" fill="#9ca3ae" font-family="Liberation Sans, sans-serif">18</text>
<text x="5.6" y="234.1" font-size="8.6" fill="#9ca3ae" font-family="Liberation Sans, sans-serif">19</text>
<text x="5.6" y="245.9" font-size="8.6" fill="#9ca3ae" font-family="Liberation Sans, sans-serif">20</text>
<text x="5.6" y="257.6" font-size="8.6" fill="#9ca3ae" font-family="Liberation Sans, sans-serif">21</text>
<text x="5.6" y="269.4" font-size="8.6" fill="#9ca3ae" font-family="Liberation Sans, sans-serif">22</text>
<text x="5.6" y="281.1" font-size="8.6" fill="#9ca3ae" font-family="Liberation Sans, sans-serif">23</text>
<text x="45.5" y="277.6" font-size="9.6" text-anchor="middle" fill="#5a78a8" font-family="Liberation Sans, sans-serif">Feb</text>
<text x="74.1" y="277.6" font-size="9.6" text-anchor="middle" fill="#5a78a8" font-family="Liberation Sans, sans-serif">Mar</text>
<text x="103.5" y="277.6" font-size="9.6" text-anchor="middle" fill="#5a78a8" font-family="Liberation Sans, sans-serif">Apr</text>
<text x="133.0" y="277.6" font-size="9.6" text-anchor="middle" fill="#5a78a8" font-family="Liberation Sans, sans-serif">May</text>
<text x="162.5" y="277.6" font-size="9.6" text-anchor="middle" fill="#5a78a8" font-family="Liberation Sans, sans-serif">Jun</text>
<text x="192.0" y="277.6" font-size="9.6" text-anchor="middle" fill="#5a78a8" font-family="Liberation Sans, sans-serif">Jul</text>
<text x="222.0" y="277.6" font-size="9.6" text-anchor="middle" fill="#5a78a8" font-family="Liberation Sans, sans-serif">Aug</text>
<text x="251.5" y="277.6" font-size="9.6" text-anchor="middle" fill="#5a78a8" font-family="Liberation Sans, sans-serif">Sep</text>
<text x="281.0" y="277.6" font-size="9.6" text-anchor="middle" fill="#5a78a8" font-family="Liberation Sans, sans-serif">Oct</text>
<text x="310.5" y="277.6" font-size="9.6" text-anchor="middle" fill="#5a78a8" font-family="Liberation Sans, sans-serif">Nov</text>
<text x="340.0" y="277.6" font-size="9.6" text-anchor="middle" fill="#5a78a8" font-family="Liberation Sans, sans-serif">Dec</text>
<path d="M77.8 2V285" stroke="#d42a3a" stroke-width="1.1" stroke-dasharray="3.5,3" fill="none"/>
<path d="M0 125.30000000000001H356" stroke="#d42a3a" stroke-width="1.1" stroke-dasharray="3.5,3" fill="none"/>
<circle cx="77.8" cy="125.30000000000001" r="4.1" fill="#ff0000"/>
<circle cx="77.8" cy="72.10000000000002" r="2.6" fill="#fff" stroke="#ff1a1a" stroke-width="1.3"/>
<circle cx="77.8" cy="215.5" r="2.6" fill="#fff" stroke="#ff1a1a" stroke-width="1.3"/>
<text x="81.8" y="82" font-size="11.6" fill="#ee1111" font-family="Liberation Sans, sans-serif">05:58</text>
<text x="81.8" y="212.5" font-size="11.6" fill="#ee1111" font-family="Liberation Sans, sans-serif">18:09</text>
<rect x="240" y="7.600000000000023" width="109.5" height="28.4" rx="3.5" fill="#cccccc" stroke="#bdbdbd" stroke-width="0.8"/>
<text x="250.5" y="25.80000000000001" font-size="12" font-weight="bold" fill="#333" font-family="Liberation Sans, sans-serif">DAY-LENGTH</text>
<path d="M331 20H338.5L334.75 23.80000000000001Z" fill="#333"/>
<path d="M1 143.10000000000002H356" stroke="#d4ccff" stroke-width="1.8"/>
<path d="M1.5 143.10000000000002H356" stroke="#6a6a7a" stroke-width="1.3" stroke-dasharray="1,3.6"/>
</svg>
<div class="abs" style="left:355px;top:87px;width:5px;height:565px;background:#fff;"></div><div class="abs" style="left:355px;top:318px;width:5px;height:10px;background:#c8c8c8;"></div>
<svg class="abs" style="left:360px;top:87px" width="667" height="565">
<defs><clipPath id="bandclip"><path d="M452.0 360.0C453.6 356.4 456.2 349.0 461.3 338.7C466.4 328.4 474.1 311.8 482.7 298.4C491.3 284.9 503.6 268.7 513.0 258.0C522.5 247.3 528.9 242.2 539.4 234.2C549.9 226.2 565.9 216.3 576.0 210.2C586.1 204.1 590.3 201.5 600.0 197.5C609.7 193.5 621.0 188.9 634.4 186.0C647.8 183.1 666.9 181.1 680.2 180.3C693.6 179.6 701.1 179.0 714.5 181.5C727.9 184.0 747.0 190.2 760.4 195.2C773.8 200.1 784.8 205.8 794.7 211.2C804.6 216.5 811.1 220.8 820.0 227.3C828.9 233.8 838.0 237.9 848.0 250.0C858.0 262.1 869.2 281.7 880.0 300.0C890.8 318.3 905.0 340.2 913.0 360.0C921.0 379.8 925.5 408.8 928.0 418.6L925.9 419.9L922.2 413.7L918.1 407.6L913.5 401.7L908.5 395.9L903.1 390.2L897.2 384.6L891.0 379.2L884.3 374.0L877.3 368.9L869.9 364.0L862.1 359.3L854.1 354.9L845.7 350.6L837.0 346.6L828.0 342.7L818.7 339.2L809.2 335.8L799.5 332.8L789.6 329.9L779.5 327.4L779.3 327.8C773.7 322.5 759.0 305.7 745.8 295.8C732.6 285.9 716.1 275.4 700.0 268.3C683.9 261.2 665.5 255.1 649.0 253.0C632.5 250.9 614.9 253.5 601.0 255.6C587.1 257.7 577.2 261.4 565.9 265.6C554.6 269.8 542.6 274.5 533.0 280.8C523.4 287.1 515.5 293.8 508.0 303.4C500.5 313.0 492.5 329.3 487.8 338.7C483.1 348.1 481.3 356.4 480.0 360.0Z"/></clipPath></defs>
<g transform="translate(-360,-87)">
<rect x="360" y="87" width="667" height="565" fill="#99ccff"/>
<path d="M421 87.5C425 88 427 91 427 96V185" fill="none" stroke="#cdc8f5" stroke-width="2"/>
<path d="M422 187.5C480 178 540 171 600 164C660 156 720 149.6 758.8 144.2C780 141 800 140.7 820 141.9M422 202.7C480 195 540 186 600 176.9C640 171 693 161.7 763.4 154.7C790 152 805 150 820 148.9M422 265C460 258 490 254 512.8 250.8M422 295C450 290 475 286 492 283M645.5 163L677 178" fill="none" stroke="#5d7eae" stroke-width="0.75" stroke-dasharray="4,2,1,2"/>
<path d="M444.5 188.6L487.8 230.7M497 179.3L543.8 214.3M547.3 171.1L588.2 196.8M593 165.3L640 185M721.4 148.9L819.5 196.7M758.8 144.2L819.5 164M681.7 154.7L730.7 177M600 168.7L630.4 185M422 248L466 297.5L500 335M367.4 318L375 339M480 200L530 250M600 290L640 320M560 270L590 300M872 530L1020 560M880 440L1020 475M830 560L880 620M960 420L1020 470M790 595L860 570M600 640L700 610M850 380L900 400M750 590L800 640M1000 420L1020 430M360 645L395 632M487 620L520 650M650 622L700 638M870 600L900 640" fill="none" stroke="#5d7eae" stroke-width="0.75" stroke-dasharray="2.5,2.5"/>
<path d="M452.0 360.0C453.6 356.4 456.2 349.0 461.3 338.7C466.4 328.4 474.1 311.8 482.7 298.4C491.3 284.9 503.6 268.7 513.0 258.0C522.5 247.3 528.9 242.2 539.4 234.2C549.9 226.2 565.9 216.3 576.0 210.2C586.1 204.1 590.3 201.5 600.0 197.5C609.7 193.5 621.0 188.9 634.4 186.0C647.8 183.1 666.9 181.1 680.2 180.3C693.6 179.6 701.1 179.0 714.5 181.5C727.9 184.0 747.0 190.2 760.4 195.2C773.8 200.1 784.8 205.8 794.7 211.2C804.6 216.5 811.1 220.8 820.0 227.3C828.9 233.8 838.0 237.9 848.0 250.0C858.0 262.1 869.2 281.7 880.0 300.0C890.8 318.3 905.0 340.2 913.0 360.0C921.0 379.8 925.5 408.8 928.0 418.6L925.9 419.9L922.2 413.7L918.1 407.6L913.5 401.7L908.5 395.9L903.1 390.2L897.2 384.6L891.0 379.2L884.3 374.0L877.3 368.9L869.9 364.0L862.1 359.3L854.1 354.9L845.7 350.6L837.0 346.6L828.0 342.7L818.7 339.2L809.2 335.8L799.5 332.8L789.6 329.9L779.5 327.4L779.3 327.8C773.7 322.5 759.0 305.7 745.8 295.8C732.6 285.9 716.1 275.4 700.0 268.3C683.9 261.2 665.5 255.1 649.0 253.0C632.5 250.9 614.9 253.5 601.0 255.6C587.1 257.7 577.2 261.4 565.9 265.6C554.6 269.8 542.6 274.5 533.0 280.8C523.4 287.1 515.5 293.8 508.0 303.4C500.5 313.0 492.5 329.3 487.8 338.7C483.1 348.1 481.3 356.4 480.0 360.0Z" fill="#cacaca"/>
<g clip-path="url(#bandclip)">
<path d="M452.0 360.0C453.6 356.4 456.2 349.0 461.3 338.7C466.4 328.4 474.1 311.8 482.7 298.4C491.3 284.9 503.6 268.7 513.0 258.0C522.5 247.3 528.9 242.2 539.4 234.2C549.9 226.2 565.9 216.3 576.0 210.2C586.1 204.1 596.0 199.6 600.0 197.5L610 200C580 215 550 240 525 275C510 295 498 320 490 345Z" fill="#e0d080" fill-opacity="0.4"/>
<path d="M451.0 360.0C454.5 356.6 465.2 349.5 472.3 339.7C479.3 330.0 484.9 314.2 493.2 301.5C501.6 288.8 513.4 273.5 522.5 263.5C531.6 253.4 537.8 248.7 547.8 241.3C557.9 233.8 573.1 224.6 582.7 219.0C592.2 213.3 596.1 210.9 605.3 207.1C614.5 203.4 625.2 199.1 637.7 196.5C650.3 193.8 668.3 192.0 680.8 191.3C693.3 190.6 700.5 190.1 713.0 192.4C725.6 194.7 743.5 200.7 756.1 205.3C768.6 209.9 779.0 215.2 788.4 220.2C797.7 225.2 803.9 229.1 812.3 235.2C820.7 241.2 829.4 244.9 839.0 256.3C848.5 267.6 859.0 286.0 869.5 303.3C880.0 320.6 894.0 341.2 902.0 360.0C910.0 378.8 914.8 406.6 917.3 416.0M463.0 360.0C466.5 356.8 477.2 350.0 484.2 340.8C491.2 331.7 496.6 316.8 504.7 305.0C512.9 293.1 524.2 278.8 532.9 269.5C541.6 260.1 547.6 255.8 557.1 248.9C566.6 242.1 580.9 233.7 589.9 228.5C598.9 223.3 602.6 221.1 611.1 217.6C619.7 214.2 629.7 210.3 641.4 207.9C653.1 205.5 669.8 203.9 681.5 203.3C693.1 202.7 699.7 202.1 711.4 204.3C723.0 206.5 739.7 212.1 751.4 216.4C763.0 220.6 772.7 225.4 781.5 230.0C790.2 234.6 796.0 238.2 803.9 243.7C811.8 249.3 820.1 252.6 829.1 263.1C838.2 273.7 847.9 290.8 858.1 306.9C868.2 323.1 882.1 342.3 890.0 360.0C897.9 377.7 903.1 404.3 905.7 413.1M475.0 360.0C478.5 357.0 489.3 350.6 496.1 341.9C503.0 333.3 508.4 319.4 516.3 308.4C524.1 297.3 535.0 284.1 543.3 275.5C551.7 266.9 557.3 262.9 566.3 256.6C575.2 250.4 588.7 242.8 597.2 238.1C605.6 233.3 609.0 231.2 617.0 228.1C624.9 225.0 634.2 221.5 645.1 219.3C655.9 217.2 671.3 215.8 682.1 215.2C692.9 214.7 699.0 214.2 709.7 216.2C720.5 218.2 735.8 223.4 746.7 227.4C757.5 231.3 766.4 235.7 774.6 239.8C782.7 244.0 788.1 247.3 795.5 252.3C803.0 257.3 810.8 260.3 819.3 270.0C827.8 279.7 836.8 295.5 846.6 310.5C856.4 325.5 870.1 343.4 878.0 360.0C885.9 376.6 891.3 401.9 894.0 410.2M488.0 360.0C491.5 357.2 502.3 351.1 509.1 343.2C515.9 335.2 521.1 322.3 528.7 312.1C536.3 301.9 546.7 289.8 554.6 282.0C562.5 274.1 567.8 270.6 576.2 265.0C584.7 259.4 597.2 252.6 605.1 248.4C612.9 244.2 615.9 242.3 623.3 239.5C630.6 236.7 639.1 233.6 649.0 231.7C658.9 229.8 673.0 228.7 682.8 228.2C692.6 227.8 698.2 227.2 708.0 229.1C717.8 230.9 731.7 235.8 741.5 239.3C751.4 242.9 759.6 246.7 767.1 250.5C774.6 254.2 779.5 257.1 786.4 261.6C793.3 266.1 800.6 268.6 808.6 277.4C816.6 286.2 824.8 300.7 834.2 314.5C843.6 328.2 857.1 344.6 865.0 360.0C872.9 375.4 878.7 399.3 881.4 407.1M502.0 360.0C505.5 357.4 516.3 351.8 523.0 344.4C529.7 337.1 534.9 325.3 542.1 316.1C549.4 306.8 559.2 296.0 566.7 289.0C574.2 281.9 579.2 278.9 587.0 273.9C594.8 269.0 606.4 263.2 613.5 259.5C620.7 255.8 623.4 254.2 630.0 251.7C636.7 249.3 644.3 246.6 653.3 245.1C662.2 243.5 674.8 242.6 683.6 242.2C692.4 241.9 697.3 241.3 706.1 242.9C714.8 244.6 727.2 249.1 736.0 252.2C744.9 255.4 752.3 258.7 759.0 261.9C765.8 265.1 770.3 267.7 776.6 271.6C783.0 275.5 789.7 277.6 797.1 285.4C804.5 293.3 811.9 306.2 820.9 318.7C829.9 331.1 843.2 345.8 851.0 360.0C858.8 374.2 865.0 396.5 867.8 403.8M226 175L486 330M260 175L520 330M294 175L554 330M328 175L588 330M362 175L622 330M396 175L656 330M430 175L690 330M464 175L724 330M498 175L758 330M532 175L792 330M566 175L826 330M600 175L860 330M634 175L894 330M668 175L928 330M702 175L962 330M736 175L996 330M770 175L1030 330M804 175L1064 330M838 175L1098 330M872 175L1132 330M906 175L1166 330M940 175L1200 330" fill="none" stroke="#78c6cf" stroke-width="0.9" stroke-opacity="0.75"/>
<path d="M520 340C500 300 510 240 550 180M565 340C545 300 555 240 595 180M610 340C590 300 600 240 640 180M655 340C635 300 645 240 685 180M700 340C680 300 690 240 730 180M745 340C725 300 735 240 775 180M790 340C770 300 780 240 820 180M835 340C815 300 825 240 865 180M880 340C860 300 870 240 910 180" fill="none" stroke="#dcb84a" stroke-width="0.8" stroke-dasharray="1.5,1.5"/>
</g>
<path d="M452.0 360.0C453.6 356.4 456.2 349.0 461.3 338.7C466.4 328.4 474.1 311.8 482.7 298.4C491.3 284.9 503.6 268.7 513.0 258.0C522.5 247.3 528.9 242.2 539.4 234.2C549.9 226.2 565.9 216.3 576.0 210.2C586.1 204.1 590.3 201.5 600.0 197.5C609.7 193.5 621.0 188.9 634.4 186.0C647.8 183.1 666.9 181.1 680.2 180.3C693.6 179.6 701.1 179.0 714.5 181.5C727.9 184.0 747.0 190.2 760.4 195.2C773.8 200.1 784.8 205.8 794.7 211.2C804.6 216.5 811.1 220.8 820.0 227.3C828.9 233.8 838.0 237.9 848.0 250.0C858.0 262.1 869.2 281.7 880.0 300.0C890.8 318.3 905.0 340.2 913.0 360.0C921.0 379.8 925.5 408.8 928.0 418.6" fill="none" stroke="#e8b040" stroke-width="0.9" stroke-dasharray="2,1"/>
<path d="M779.3 327.8C773.7 322.5 759.0 305.7 745.8 295.8C732.6 285.9 716.1 275.4 700.0 268.3C683.9 261.2 665.5 255.1 649.0 253.0C632.5 250.9 614.9 253.5 601.0 255.6C587.1 257.7 577.2 261.4 565.9 265.6C554.6 269.8 542.6 274.5 533.0 280.8C523.4 287.1 515.5 293.8 508.0 303.4C500.5 313.0 492.5 329.3 487.8 338.7C483.1 348.1 481.3 356.4 480.0 360.0" fill="none" stroke="#d8a848" stroke-width="0.8" stroke-dasharray="2,1"/>
<path d="M461.0 337.0C464.5 330.5 473.8 310.5 482.0 298.0C490.2 285.5 500.4 271.7 510.0 262.0C519.6 252.3 524.5 247.9 539.5 239.6C554.5 231.3 578.5 218.1 600.0 212.4C621.5 206.7 649.6 205.3 668.7 205.5C687.8 205.7 699.2 209.3 714.5 213.5C729.8 217.7 747.0 224.0 760.4 230.7C773.8 237.4 784.8 245.0 794.7 253.6C804.6 262.2 810.8 270.4 820.0 282.3C829.2 294.2 841.3 311.1 850.0 325.0C858.7 338.9 868.3 359.2 872.0 366.0" fill="none" stroke="#e85535" stroke-width="1.35"/>
<path d="M460.8 146.6L623.8 338.7" stroke="#3a3ac0" stroke-width="1.05"/>
<path d="M470.2 151.3L460.8 146.6L465.6 157.1" fill="none" stroke="#3a3ac0" stroke-width="1.05"/>
<circle cx="540" cy="239.7" r="5.3" fill="#f6f030" fill-opacity="0.95"/><circle cx="535" cy="238" r="2" fill="#f8f050"/><circle cx="544" cy="236" r="1.8" fill="#f8f050"/>
<circle cx="540" cy="239.7" r="2.4" fill="#ff2020"/>
<path d="M938.3 468.3 L938.1 472.0 L937.7 475.8 L937.2 479.5 L936.5 483.2 L935.6 486.9 L934.6 490.6 L933.4 494.3 L932.0 497.9 L930.5 501.5 L928.8 505.1 L927.0 508.7 L925.0 512.2 L922.9 515.7 L920.6 519.1 L918.1 522.6 L915.5 525.9 L912.7 529.3 L909.8 532.5 L906.8 535.8 L903.6 538.9 L900.3 542.1 L896.8 545.1 L893.2 548.1 L889.4 551.1 L885.5 554.0 L881.5 556.8 L877.4 559.6 L873.1 562.2 L868.7 564.9 L864.2 567.4 L859.6 569.9 L854.9 572.3 L850.1 574.6 L845.1 576.8 L840.1 579.0 L834.9 581.1 L829.7 583.1 L824.4 585.0 L818.9 586.8 L813.4 588.6 L807.9 590.2 L802.2 591.8 L796.5 593.3 L790.7 594.7 L784.8 596.0 L778.9 597.2 L772.9 598.3 L766.9 599.3 L760.8 600.2 L754.7 601.0 L748.5 601.8 L742.3 602.4 L736.1 602.9 L729.9 603.4 L723.6 603.7 L717.3 604.0 L711.0 604.1 L704.6 604.1 L698.3 604.1 L692.0 603.9 L685.7 603.7 L679.4 603.3 L673.0 602.9 L666.8 602.3 L660.5 601.7 L654.2 600.9 L648.0 600.1 L641.8 599.2 L635.7 598.2 L629.6 597.0 L623.5 595.8 L617.5 594.5 L611.6 593.1 L605.7 591.6 L599.9 590.0 L594.1 588.4 L588.4 586.6 L582.8 584.8 L577.2 582.8 L571.8 580.8 L566.4 578.7 L561.1 576.6 L555.9 574.3 L550.8 572.0 L545.8 569.6 L540.9 567.1 L536.1 564.5 L531.5 561.9 L526.9 559.2 L522.5 556.4 L518.1 553.6 L513.9 550.7 L509.8 547.7 L505.9 544.7 L502.1 541.7 L498.4 538.5 L494.8 535.3 L491.4 532.1 L488.1 528.8 L485.0 525.5 L482.0 522.1 L479.2 518.7 L476.5 515.2 L473.9 511.7 L471.6 508.2 L469.3 504.7 L467.2 501.1 L465.3 497.4 L463.6 493.8 L462.0 490.1 L460.5 486.4 L459.2 482.7 L458.1 479.0 L457.2 475.3 L456.4 471.5 L455.8 467.8 L455.3 464.0 L455.0 460.3 L454.9 456.5 L454.9 452.7 L455.1 449.0 L455.5 445.2 L456.0 441.5 L456.7 437.8 L457.6 434.1 L458.6 430.4 L459.8 426.7 L461.2 423.1 L462.7 419.5 L464.4 415.9 L466.2 412.3 L468.2 408.8 L470.3 405.3 L472.6 401.9 L475.1 398.4 L477.7 395.1 L480.5 391.7 L483.4 388.5 L486.4 385.2 L489.6 382.1 L492.9 378.9 L496.4 375.9 L500.0 372.9 L503.8 369.9 L507.7 367.0 L511.7 364.2 L515.8 361.4 L520.1 358.8 L524.5 356.1 L529.0 353.6 L533.6 351.1 L538.3 348.7 L543.1 346.4 L548.1 344.2 L553.1 342.0 L558.3 339.9 L563.5 337.9 L568.8 336.0 L574.3 334.2 L579.8 332.4 L585.3 330.8 L591.0 329.2 L596.7 327.7 L602.5 326.3 L608.4 325.0 L614.3 323.8 L620.3 322.7 L626.3 321.7 L632.4 320.8 L638.5 320.0 L644.7 319.2 L650.9 318.6 L657.1 318.1 L663.3 317.6 L669.6 317.3 L675.9 317.0 L682.2 316.9 L688.6 316.9 L694.9 316.9 L701.2 317.1 L707.5 317.3 L713.8 317.7 L720.2 318.1 L726.4 318.7 L732.7 319.3 L739.0 320.1 L745.2 320.9 L751.4 321.8 L757.5 322.8 L763.6 324.0 L769.7 325.2 L775.7 326.5 L781.6 327.9 L787.5 329.4 L793.3 331.0 L799.1 332.6 L804.8 334.4 L810.4 336.2 L816.0 338.2 L821.4 340.2 L826.8 342.3 L832.1 344.4 L837.3 346.7 L842.4 349.0 L847.4 351.4 L852.3 353.9 L857.1 356.5 L861.7 359.1 L866.3 361.8 L870.7 364.6 L875.1 367.4 L879.3 370.3 L883.4 373.3 L887.3 376.3 L891.1 379.3 L894.8 382.5 L898.4 385.7 L901.8 388.9 L905.1 392.2 L908.2 395.5 L911.2 398.9 L914.0 402.3 L916.7 405.8 L919.3 409.3 L921.6 412.8 L923.9 416.3 L926.0 419.9 L927.9 423.6 L929.6 427.2 L931.2 430.9 L932.7 434.6 L934.0 438.3 L935.1 442.0 L936.0 445.7 L936.8 449.5 L937.4 453.2 L937.9 457.0 L938.2 460.7 L938.3 464.5 L938.3 468.3Z" fill="none" stroke="#a89a8a" stroke-width="1.3"/>
<path d="M938.3 468.3L944.3 468.5M938.2 470.8L941.1 470.9M938.0 473.3L940.9 473.4M937.7 475.8L940.6 475.9M937.4 478.2L940.3 478.5M937.0 480.7L943.0 481.2M936.5 483.2L939.3 483.5M935.9 485.7L938.8 486.0M935.3 488.1L938.1 488.5M934.6 490.6L937.4 491.0M933.8 493.1L939.7 493.9M933.0 495.5L935.8 495.9M932.0 497.9L934.9 498.4M931.0 500.3L933.9 500.8M930.0 502.7L932.8 503.2M928.8 505.1L934.7 506.2M927.6 507.5L930.4 508.1M926.4 509.9L929.1 510.5M925.0 512.2L927.8 512.8M923.6 514.5L926.3 515.2M922.1 516.9L927.8 518.3M920.6 519.1L923.3 519.9M919.0 521.4L921.6 522.2M917.3 523.7L919.9 524.4M915.5 525.9L918.1 526.7M913.7 528.2L919.1 529.8M911.8 530.4L914.4 531.2M909.8 532.5L912.4 533.4M907.8 534.7L910.4 535.6M905.7 536.8L908.2 537.7M903.6 538.9L908.8 540.9M901.4 541.0L903.8 542.0M899.1 543.1L901.5 544.1M896.8 545.1L899.2 546.1M894.4 547.1L896.8 548.2M891.9 549.1L896.8 551.3M889.4 551.1L891.7 552.2M886.8 553.0L889.1 554.1M884.2 554.9L886.5 556.1M881.5 556.8L883.7 558.0M878.8 558.6L883.3 561.1M876.0 560.5L878.1 561.7M873.1 562.2L875.2 563.5M870.2 564.0L872.3 565.2M867.2 565.7L869.3 567.0M864.2 567.4L868.4 570.1M861.2 569.1L863.1 570.4M858.1 570.7L860.0 572.0M854.9 572.3L856.8 573.6M851.7 573.8L853.5 575.2M848.4 575.4L852.2 578.2M845.1 576.8L846.9 578.2M841.8 578.3L843.5 579.7M838.4 579.7L840.1 581.1M834.9 581.1L836.6 582.5M831.4 582.4L834.8 585.5M827.9 583.7L829.5 585.2M824.4 585.0L825.9 586.5M820.8 586.2L822.3 587.8M817.1 587.4L818.6 589.0M813.4 588.6L816.4 591.8M809.7 589.7L811.1 591.3M806.0 590.8L807.3 592.3M802.2 591.8L803.5 593.4M798.4 592.8L799.6 594.4M794.6 593.8L797.0 597.1M790.7 594.7L791.8 596.3M786.8 595.6L787.9 597.2M782.9 596.4L783.9 598.0M778.9 597.2L779.9 598.8M774.9 597.9L776.9 601.4M770.9 598.6L771.8 600.3M766.9 599.3L767.7 601.0M762.9 599.9L763.6 601.6M758.8 600.5L759.5 602.2M754.7 601.0L756.2 604.6M750.6 601.5L751.2 603.2M746.5 602.0L747.1 603.7M742.3 602.4L742.9 604.1M738.2 602.8L738.7 604.5M734.0 603.1L735.0 606.7M729.9 603.4L730.3 605.1M725.7 603.6L726.0 605.3M721.5 603.8L721.8 605.5M717.3 604.0L717.5 605.7M713.1 604.1L713.5 607.6M708.9 604.1L709.0 605.8M704.6 604.1L704.7 605.9M700.4 604.1L700.5 605.8M696.2 604.0L696.2 605.8M692.0 603.9L691.9 607.5M687.8 603.8L687.7 605.5M683.6 603.6L683.4 605.3M679.4 603.3L679.1 605.0M675.1 603.0L674.9 604.7M670.9 602.7L670.3 606.3M666.8 602.3L666.4 604.0M662.6 601.9L662.2 603.6M658.4 601.4L657.9 603.1M654.2 600.9L653.7 602.6M650.1 600.4L648.9 603.9M646.0 599.8L645.4 601.5M641.8 599.2L641.2 600.8M637.7 598.5L637.0 600.2M633.7 597.8L632.9 599.4M629.6 597.0L627.9 600.4M625.6 596.2L624.7 597.9M621.5 595.4L620.6 597.0M617.5 594.5L616.6 596.1M613.6 593.6L612.6 595.2M609.6 592.6L607.4 595.9M605.7 591.6L604.6 593.2M601.8 590.6L600.7 592.1M597.9 589.5L596.7 591.0M594.1 588.4L592.9 589.9M590.3 587.2L587.6 590.4M586.5 586.0L585.2 587.5M582.8 584.8L581.4 586.3M579.1 583.5L577.7 585.0M575.4 582.2L573.9 583.6M571.8 580.8L568.7 583.8M568.2 579.4L566.6 580.9M564.6 578.0L563.0 579.4M561.1 576.6L559.5 578.0M557.6 575.1L556.0 576.4M554.2 573.5L550.6 576.4M550.8 572.0L549.1 573.3M547.5 570.4L545.7 571.7M544.2 568.7L542.3 570.0M540.9 567.1L539.1 568.4M537.7 565.4L533.8 568.0M534.6 563.7L532.6 564.9M531.5 561.9L529.5 563.1M528.4 560.1L526.4 561.3M525.4 558.3L523.3 559.5M522.5 556.4L518.1 558.8M519.6 554.5L517.4 555.7M516.7 552.6L514.5 553.7M513.9 550.7L511.7 551.8M511.2 548.7L509.0 549.8M508.5 546.7L503.8 548.9M505.9 544.7L503.6 545.7M503.3 542.7L501.0 543.7M500.8 540.6L498.5 541.6M498.4 538.5L496.0 539.5M496.0 536.4L491.0 538.3M493.7 534.3L491.2 535.2M491.4 532.1L488.9 533.0M489.2 529.9L486.7 530.8M487.1 527.7L484.6 528.5M485.0 525.5L479.7 527.1M483.0 523.2L480.4 524.0M481.1 521.0L478.5 521.7M479.2 518.7L476.6 519.4M477.4 516.4L474.7 517.1M475.6 514.1L470.1 515.4M473.9 511.7L471.3 512.4M472.3 509.4L469.6 510.0M470.8 507.0L468.1 507.6M469.3 504.7L466.6 505.2M467.9 502.3L462.2 503.3M466.6 499.9L463.8 500.3M465.3 497.4L462.6 497.9M464.1 495.0L461.3 495.4M463.0 492.6L460.2 493.0M462.0 490.1L456.1 490.9M461.0 487.7L458.2 488.0M460.1 485.2L457.2 485.5M459.2 482.7L456.4 483.0M458.5 480.2L455.6 480.5M457.8 477.8L451.8 478.2M457.2 475.3L454.3 475.4M456.6 472.8L453.8 472.9M456.2 470.3L453.3 470.4M455.8 467.8L452.9 467.9M455.4 465.3L449.4 465.4M455.2 462.8L452.3 462.8M455.0 460.3L452.1 460.3M454.9 457.7L452.0 457.7M454.9 455.2L452.0 455.2M454.9 452.7L448.9 452.5M455.0 450.2L452.1 450.1M455.2 447.7L452.3 447.6M455.5 445.2L452.6 445.1M455.8 442.8L452.9 442.5M456.2 440.3L450.2 439.8M456.7 437.8L453.9 437.5M457.3 435.3L454.4 435.0M457.9 432.9L455.1 432.5M458.6 430.4L455.8 430.0M459.4 427.9L453.5 427.1M460.2 425.5L457.4 425.1M461.2 423.1L458.3 422.6M462.2 420.7L459.3 420.2M463.2 418.3L460.4 417.8M464.4 415.9L458.5 414.8M465.6 413.5L462.8 412.9M466.8 411.1L464.1 410.5M468.2 408.8L465.4 408.2M469.6 406.5L466.9 405.8M471.1 404.1L465.4 402.7M472.6 401.9L469.9 401.1M474.2 399.6L471.6 398.8M475.9 397.3L473.3 396.6M477.7 395.1L475.1 394.3M479.5 392.8L474.1 391.2M481.4 390.6L478.8 389.8M483.4 388.5L480.8 387.6M485.4 386.3L482.8 385.4M487.5 384.2L485.0 383.3M489.6 382.1L484.4 380.1M491.8 380.0L489.4 379.0M494.1 377.9L491.7 376.9M496.4 375.9L494.0 374.9M498.8 373.9L496.4 372.8M501.3 371.9L496.4 369.7M503.8 369.9L501.5 368.8M506.4 368.0L504.1 366.9M509.0 366.1L506.7 364.9M511.7 364.2L509.5 363.0M514.4 362.4L509.9 359.9M517.2 360.5L515.1 359.3M520.1 358.8L518.0 357.5M523.0 357.0L520.9 355.8M526.0 355.3L523.9 354.0M529.0 353.6L524.8 350.9M532.0 351.9L530.1 350.6M535.1 350.3L533.2 349.0M538.3 348.7L536.4 347.4M541.5 347.2L539.7 345.8M544.8 345.6L541.0 342.8M548.1 344.2L546.3 342.8M551.4 342.7L549.7 341.3M554.8 341.3L553.1 339.9M558.3 339.9L556.6 338.5M561.8 338.6L558.4 335.5M565.3 337.3L563.7 335.8M568.8 336.0L567.3 334.5M572.4 334.8L570.9 333.2M576.1 333.6L574.6 332.0M579.8 332.4L576.8 329.2M583.5 331.3L582.1 329.7M587.2 330.2L585.9 328.7M591.0 329.2L589.7 327.6M594.8 328.2L593.6 326.6M598.6 327.2L596.2 323.9M602.5 326.3L601.4 324.7M606.4 325.4L605.3 323.8M610.3 324.6L609.3 323.0M614.3 323.8L613.3 322.2M618.3 323.1L616.3 319.6M622.3 322.4L621.4 320.7M626.3 321.7L625.5 320.0M630.3 321.1L629.6 319.4M634.4 320.5L633.7 318.8M638.5 320.0L637.0 316.4M642.6 319.5L642.0 317.8M646.7 319.0L646.1 317.3M650.9 318.6L650.3 316.9M655.0 318.2L654.5 316.5M659.2 317.9L658.2 314.3M663.3 317.6L662.9 315.9M667.5 317.4L667.2 315.7M671.7 317.2L671.4 315.5M675.9 317.0L675.7 315.3M680.1 316.9L679.7 313.4M684.3 316.9L684.2 315.2M688.6 316.9L688.5 315.1M692.8 316.9L692.7 315.2M697.0 317.0L697.0 315.2M701.2 317.1L701.3 313.5M705.4 317.2L705.5 315.5M709.6 317.4L709.8 315.7M713.8 317.7L714.1 316.0M718.1 318.0L718.3 316.3M722.3 318.3L722.9 314.7M726.4 318.7L726.8 317.0M730.6 319.1L731.0 317.4M734.8 319.6L735.3 317.9M739.0 320.1L739.5 318.4M743.1 320.6L744.3 317.1M747.2 321.2L747.8 319.5M751.4 321.8L752.0 320.2M755.5 322.5L756.2 320.8M759.5 323.2L760.3 321.6M763.6 324.0L765.3 320.6M767.6 324.8L768.5 323.1M771.7 325.6L772.6 324.0M775.7 326.5L776.6 324.9M779.6 327.4L780.6 325.8M783.6 328.4L785.8 325.1M787.5 329.4L788.6 327.8M791.4 330.4L792.5 328.9M795.3 331.5L796.5 330.0M799.1 332.6L800.3 331.1M802.9 333.8L805.6 330.6M806.7 335.0L808.0 333.5M810.4 336.2L811.8 334.7M814.1 337.5L815.5 336.0M817.8 338.8L819.3 337.4M821.4 340.2L824.5 337.2M825.0 341.6L826.6 340.1M828.6 343.0L830.2 341.6M832.1 344.4L833.7 343.0M835.6 345.9L837.2 344.6M839.0 347.5L842.6 344.6M842.4 349.0L844.1 347.7M845.7 350.6L847.5 349.3M849.0 352.3L850.9 351.0M852.3 353.9L854.1 352.6M855.5 355.6L859.4 353.0M858.6 357.3L860.6 356.1M861.7 359.1L863.7 357.9M864.8 360.9L866.8 359.7M867.8 362.7L869.9 361.5M870.7 364.6L875.1 362.2M873.6 366.5L875.8 365.3M876.5 368.4L878.7 367.3M879.3 370.3L881.5 369.2M882.0 372.3L884.2 371.2M884.7 374.3L889.4 372.1M887.3 376.3L889.6 375.3M889.9 378.3L892.2 377.3M892.4 380.4L894.7 379.4M894.8 382.5L897.2 381.5M897.2 384.6L902.2 382.7M899.5 386.7L902.0 385.8M901.8 388.9L904.3 388.0M904.0 391.1L906.5 390.2M906.1 393.3L908.6 392.5M908.2 395.5L913.5 393.9M910.2 397.8L912.8 397.0M912.1 400.0L914.7 399.3M914.0 402.3L916.6 401.6M915.8 404.6L918.5 403.9M917.6 406.9L923.1 405.6M919.3 409.3L921.9 408.6M920.9 411.6L923.6 411.0M922.4 414.0L925.1 413.4M923.9 416.3L926.6 415.8M925.3 418.7L931.0 417.7M926.6 421.1L929.4 420.7M927.9 423.6L930.6 423.1M929.1 426.0L931.9 425.6M930.2 428.4L933.0 428.0M931.2 430.9L937.1 430.1M932.2 433.3L935.0 433.0M933.1 435.8L936.0 435.5M934.0 438.3L936.8 438.0M934.7 440.8L937.6 440.5M935.4 443.2L941.4 442.8M936.0 445.7L938.9 445.6M936.6 448.2L939.4 448.1M937.0 450.7L939.9 450.6M937.4 453.2L940.3 453.1M937.8 455.7L943.8 455.6M938.0 458.2L940.9 458.2M938.2 460.7L941.1 460.7M938.3 463.3L941.2 463.3M938.3 465.8L941.2 465.8" fill="none" stroke="#a89a8a" stroke-width="0.7"/>
<path d="M785 508L858 580" stroke="#8a8a8a" stroke-width="1.2"/>
<path d="M861 583L849 578L856 571Z" fill="#555"/>
<text font-size="15" font-weight="bold" fill="#555" font-family="Liberation Sans, sans-serif" transform="translate(860,595) rotate(-30)">N</text>
<g font-size="7" fill="#666" font-family="Liberation Sans, sans-serif"><text transform="translate(947,450) rotate(80)">NW</text><text transform="translate(940,492) rotate(70)">330</text><text transform="translate(905,542) rotate(50)">345</text></g>
<path d="M667.6 307.5L684.8 304L689.3 308.6V339H667.6Z" fill="#a30000"/>
<path d="M667.6 307.5L684.8 304L689.3 308.6L672 311Z" fill="#e00000"/>
<path d="M667.6 307.5V339" stroke="#600" stroke-width="0.6"/>
<path d="M563 332.5H582L585 339H563Z" fill="#fff" stroke="#777" stroke-width="0.6"/>
<path d="M709 334.5L716 333.5L717.5 338.5H709Z" fill="#8a8a8a"/>
<path d="M785 419C794.0 420.2 800 423.4 803 427C801 427.7 792.2 426.7 785 426.7ZM785 431.3C797.75 433.58 807.5 439.66 810.5 446.5C808.5 447.5 795.2 446.5 785 446.5ZM785 446C801.15 448.49 814.3 455.13 817.3 462.6C815.3 463.6 797.92 462.6 785 462.6ZM785 459.5C808.4 461.57 828.8 467.09000000000003 831.8 473.3C829.8 482 803.72 481 785 481ZM785 476C795.8 477.65 803.6 482.05 806.6 487C804.6 489.5 793.64 488.5 785 488.5Z" fill="#9a90c8" fill-opacity="0.95"/>
<path d="M785 445.8L803.6 461M785 478L814.3 467.2M811.2 467.2L824.2 479.4M787 422L797 424M789 436L808 441" stroke="#40508a" stroke-width="0.9" fill="none"/>
</g></svg>
<svg class="abs" style="left:815px;top:87px" width="212" height="330">
<defs>
 <pattern id="hatch" width="16" height="8" patternUnits="userSpaceOnUse">
  <rect width="16" height="8" fill="#cbcbcb"/>
  <path d="M1 2H9M9.5 6H15.5" stroke="#fff" stroke-width="1.8"/>
 </pattern>
 <pattern id="diam" width="24" height="14" patternUnits="userSpaceOnUse" patternTransform="translate(3,2)">
  <rect width="24" height="14" fill="#f8f8f8"/>
  <path d="M0 0L24 14M24 0L0 14" stroke="#c2c2c2" stroke-width="2.8"/>
 </pattern>
</defs>
<g transform="translate(-815,-87)">
 <path d="M820.5 97A5 5 0 0 1 825.5 92H1016.5A5 5 0 0 1 1021.5 97V122.5H820.5Z" fill="#cbcbcb"/>
 <path d="M820.5 122.5H1021.5V207A5 5 0 0 1 1016.5 212H825.5A5 5 0 0 1 820.5 207Z" fill="#fff"/>
 <path d="M820.5 152.3H1021.5M820.5 182H1021.5" stroke="#d0d0d0" stroke-width="1"/>
 <rect x="820.5" y="148" width="146.5" height="4" fill="#cbc86a"/>
 <rect x="925.8" y="148" width="41.2" height="4" fill="#f7c25c"/>
 <rect x="820.5" y="178" width="60.5" height="4" fill="#cbc86a"/>
 <rect x="865.4" y="178" width="15.6" height="4" fill="#f7c25c"/>
 <rect x="820.5" y="208" width="61" height="4" fill="#cbc86a"/>
 <rect x="866" y="208" width="15.5" height="4" fill="#f7c25c"/>
 <path d="M820.5 222A5 5 0 0 1 825.5 217.2H1016.5A5 5 0 0 1 1021.5 222V242.5A5 5 0 0 1 1016.5 247.4H825.5A5 5 0 0 1 820.5 242.5Z" fill="url(#hatch)"/>
 <path d="M820.5 257A5 5 0 0 1 825.5 252.2H1016.5A5 5 0 0 1 1021.5 257V282.4H820.5Z" fill="url(#hatch)"/>
 <path d="M820.5 282.4H1021.5V366.5A5 5 0 0 1 1016.5 371.5H825.5A5 5 0 0 1 820.5 366.5Z" fill="#fff"/>
 <path d="M820.5 312.3H1021.5M820.5 342.3H1021.5" stroke="#d0d0d0" stroke-width="1"/>
 <path d="M820.5 383A5 5 0 0 1 825.5 378.2H1016.5A5 5 0 0 1 1021.5 383V402.5A5 5 0 0 1 1016.5 407.3H825.5A5 5 0 0 1 820.5 402.5Z" fill="url(#diam)"/>

 <g stroke="#b8b8d8" stroke-width="0.8" fill="none" opacity="0.7">
  <path d="M821 150L880 135L1020 158"/>
  <path d="M821 168L1020 210"/>
  <path d="M821 186L960 150L1020 140"/>
  <path d="M821 199L880 185L1020 200"/>
  <path d="M830 205L900 160L1000 205"/>
 </g>
 <g stroke="#b8b8d8" stroke-width="0.8" fill="none" opacity="0.7">
  <path d="M821 360L1020 300"/>
  <path d="M870 283L1020 340"/>
  <path d="M821 330L960 370"/>
  <path d="M900 283L1020 312"/>
 </g>
 <path d="M870 283C880 305 900 345 925 371" stroke="#e2d8a0" stroke-width="0.8" fill="none"/>
 <path d="M825 285C835 300 850 330 865 366" stroke="#f0b0b0" stroke-width="1.2" fill="none"/>
 <g font-family="Liberation Sans, sans-serif" font-weight="bold" fill="#5d5d5d" font-size="12.6" letter-spacing="0.45">
  <text x="826.5" y="112.2">GEOGRAPHIC LOCATION</text>
  <text x="826.5" y="236.9">DATE AND TIME</text>
  <text x="826.5" y="272">SOLAR INFORMATION</text>
  <text x="826.5" y="397">TWILIGHT TIMES</text>
 </g>
 <g fill="none" stroke="#888" stroke-width="1">
  <path d="M1003.5 105L1008.7 110.3L1014 105"/>
  <path d="M1006 226.5L1011 232L1006 237.5"/>
  <path d="M1006 261.5L1011 267L1006 272.5"/>
  <path d="M1006 386.5L1011 392L1006 397.5"/>
 </g>
 <g font-family="Liberation Sans, sans-serif" font-size="13.2" fill="#666">
  <text x="826.5" y="141.8">Latitude:</text>
  <text x="826.5" y="171.8">Longitude:</text>
  <text x="826.5" y="201.8">Timezone:</text>
  <text x="826.5" y="301.5">Azi / Alt:</text>
  <text x="826.5" y="331.5">Rise / Set:</text>
  <text x="826.5" y="361.5">Daylight:</text>
 </g>
 <g font-family="Liberation Sans, sans-serif" font-size="13.2" text-anchor="end">
  <text x="1015.8" y="141.8" fill="#8a8a5c">40.701°</text>
  <text x="1015.8" y="171.8" fill="#8a8a5c">-74.009°</text>
  <text x="1015.8" y="201.8" fill="#8a8a5c">GMT-05:00</text>
  <text x="1015.8" y="301.5" fill="#666">146.26° / 44.43°</text>
  <text x="1015.8" y="331.5" fill="#666">05:58 / 18:09</text>
  <text x="1015.8" y="361.5" fill="#666">12:11 Hrs</text>
 </g>
</g>
</svg>

<div class="abs" style="left:198px;top:82.5px;width:223.5px;height:235.5px;background:#fff;border:1px solid #cfcfcf;border-top-color:#d8d8d8;border-radius:0 4px 4px 4px;box-sizing:border-box;"></div>
<div class="abs" style="left:198px;top:121px;width:224px;height:36px;border:4px solid #ff0000;box-sizing:border-box;"></div>
<div class="abs" style="left:212.5px;top:91.8px;font-size:16px;color:#7a7a7a;white-space:nowrap;line-height:20px;">Shadow Model</div>
<div class="abs" style="left:214px;top:130px;font-size:14px;color:#2e2e2e;white-space:nowrap;line-height:18px;">Load OBJ, STL or PLY...</div>
<div class="abs" style="left:214px;top:169px;font-size:14px;color:#333;white-space:nowrap;line-height:18px;">Reverse Normals</div>
<div class="abs" style="left:214px;top:199px;font-size:14px;color:#333;white-space:nowrap;line-height:18px;">Reverse Face Winding</div>
<div class="abs" style="left:214px;top:229px;font-size:14px;color:#333;white-space:nowrap;line-height:18px;">Sit on Ground Plane</div>
<div class="abs" style="left:214px;top:259px;font-size:14px;color:#333;white-space:nowrap;line-height:18px;">Swap Y and Z Axis</div>
<div class="abs" style="left:214px;top:289px;font-size:14px;color:#333;white-space:nowrap;line-height:18px;">Mirror in Y Axis</div>

<div class="abs" style="left:781px;top:338.5px;width:4px;height:161px;background:#cfcfcf;"></div>
<div class="abs" style="left:367.5px;top:340.5px;width:414px;height:280px;background:#fff;border-radius:8px 8px 7px 7px;box-shadow:0 0 0 1px rgba(150,140,190,0.5);"></div>
<div class="abs" style="left:368px;top:371px;width:101px;height:219px;border:1px solid #d2d2d2;border-left:none;box-sizing:border-box;"></div>
<div class="abs" style="left:372px;top:550px;width:93px;height:1px;background:#cfcfcf;"></div>
<div class="abs" style="left:469px;top:445px;width:312px;height:25px;background:#fdcccb;"></div>
<div class="abs" style="left:727px;top:345px;width:50.5px;height:22px;background:#f0622e;border-radius:4px;"></div>
<div id="dlgtext" style="font-family:'Liberation Sans',sans-serif;">
<div class="abs" style="left:383px;top:349px;font-size:9px;font-weight:bold;color:#3a3a3a;line-height:14px;">Cancel</div>
<div class="abs" style="left:551.5px;top:349px;font-size:9px;font-weight:bold;color:#3a3a3a;line-height:14px;">Open Files</div>
<div class="abs" style="left:740.5px;top:349px;font-size:9px;font-weight:bold;color:#fff;line-height:14px;">Open</div>
<div class="abs" style="left:396.5px;top:379.5px;font-size:10px;letter-spacing:-0.25px;color:#505050;line-height:14px;">Recent</div>
<div class="abs" style="left:396.5px;top:403.5px;font-size:10px;letter-spacing:-0.25px;color:#505050;line-height:14px;">Home</div>
<div class="abs" style="left:396.5px;top:428px;font-size:10px;letter-spacing:-0.25px;color:#505050;line-height:14px;">Documents</div>
<div class="abs" style="left:396.5px;top:452.5px;font-size:10px;letter-spacing:-0.25px;color:#505050;line-height:14px;">Downloads</div>
<div class="abs" style="left:396.5px;top:477px;font-size:10px;letter-spacing:-0.25px;color:#505050;line-height:14px;">Music</div>
<div class="abs" style="left:396.5px;top:501.5px;font-size:10px;letter-spacing:-0.25px;color:#505050;line-height:14px;">Pictures</div>
<div class="abs" style="left:396.5px;top:526px;font-size:10px;letter-spacing:-0.25px;color:#505050;line-height:14px;">Videos</div>
<div class="abs" style="left:396.5px;top:558.5px;font-size:10px;letter-spacing:-0.25px;color:#505050;line-height:14px;">get</div>
<div class="abs" style="left:368px;top:580px;width:101px;height:10px;overflow:hidden;"><div style="position:absolute;left:28.5px;top:3px;font-size:10px;letter-spacing:-0.25px;color:#505050;line-height:14px;">literature</div></div>
<div class="abs" style="left:474px;top:404.8px;font-size:8.4px;color:#b0b0b0;line-height:10px;">Name</div>
<div class="abs" style="left:643px;top:404.8px;font-size:8.4px;color:#b0b0b0;line-height:10px;">Size</div>
<div class="abs" style="left:692.5px;top:404.8px;font-size:8.4px;color:#b0b0b0;line-height:10px;">Type</div>
<div class="abs" style="left:731.5px;top:404.8px;font-size:8.4px;color:#b0b0b0;line-height:10px;">Modified</div>
<div class="abs" style="left:491.5px;top:426px;font-size:10px;letter-spacing:-0.25px;color:#505050;line-height:14px;">shoebox_shade.mtl</div>
<div class="abs" style="left:643px;top:426px;font-size:10px;letter-spacing:-0.25px;color:#505050;line-height:14px;">449 bytes</div>
<div class="abs" style="left:692px;top:426px;font-size:10px;letter-spacing:-0.25px;color:#505050;line-height:14px;">Image</div>
<div class="abs" style="left:731.5px;top:426px;font-size:10px;letter-spacing:-0.25px;color:#505050;line-height:14px;">10:19</div>
<div class="abs" style="left:491.5px;top:451px;font-size:10px;letter-spacing:-0.25px;color:#505050;line-height:14px;">shoebox_shade.obj</div>
<div class="abs" style="left:643px;top:451px;font-size:10px;letter-spacing:-0.25px;color:#505050;line-height:14px;">3.6 kB</div>
<div class="abs" style="left:692px;top:451px;font-size:10px;letter-spacing:-0.25px;color:#505050;line-height:14px;">Image</div>
<div class="abs" style="left:731.5px;top:451px;font-size:10px;letter-spacing:-0.25px;color:#505050;line-height:14px;">10:19</div>
<div class="abs" style="left:389.5px;top:598.5px;font-size:10px;letter-spacing:-0.25px;color:#555;line-height:14px;">Open files read-only</div>
<div class="abs" style="left:727px;top:598.5px;font-size:9px;font-weight:bold;color:#3a3a3a;line-height:14px;">(None)</div>
</div>
<svg class="abs" style="left:360px;top:335px" width="430" height="290">
<g transform="translate(-360,-335)" fill="none" stroke="#555" stroke-width="1">
 <circle cx="711" cy="355.5" r="3.8"/><path d="M713.8 358.3L716.3 360.8"/>
 <rect x="762.5" y="381.5" width="3.5" height="3.5" rx="0.8"/><rect x="768" y="381.5" width="3.5" height="3.5" rx="0.8"/>
 <rect x="762.5" y="386.5" width="3.5" height="3.5" rx="0.8"/><rect x="768" y="386.5" width="3.5" height="3.5" rx="0.8"/>
 <path d="M769.5 408L772 410.5L774.5 408"/>
 <path d="M763.5 604.5L766.5 607.5L769.5 604.5"/>
 <path d="M377 611.5H385" stroke="#888"/>
 <!-- sidebar icons -->
 <path d="M383 383A4.5 4.5 0 1 0 386.5 381.8M386.5 383.5V386.5L388.5 388M382.5 381V383.5H385"/>
 <path d="M382 414.5V409.5L386.5 405.5L391 409.5V414.5H388V411H385V414.5Z"/>
 <path d="M383 430H388.5L390.5 432V440.5H383Z"/><path d="M384.8 435H388.5M384.8 437.5H388.5" stroke-width="1.6"/>
 <path d="M386.5 453.5V461M383.5 458.5L386.5 461.5L389.5 458.5M382.5 464H390.5"/>
 <path d="M384.5 488V479.5L390.5 478.5V486.5"/><circle cx="383.5" cy="488" r="1.2" fill="#555"/><circle cx="389.5" cy="486.5" r="1.2" fill="#555"/>
 <rect x="382" y="503.5" width="10" height="9" rx="1"/><path d="M383.5 511L386 507.5L388 510L390 508" />
 <rect x="382.5" y="528" width="9" height="10" rx="1"/><path d="M382.5 533H391.5M384.5 528V538M389.5 528V538"/>
 <path d="M382 561.5H386L387 562.5H392V570H382Z"/>
 <path d="M382 587V590M382 587H386L387 588H392V590"/>
</g>
 <rect x="117.5" y="92" width="10" height="10" rx="2" fill="#b44fc0" transform="translate(-0,0)"/>
 <path d="M119.5 99.5L122 95.5L124.5 99.5Z" fill="#f1d0f5"/>
 <rect x="117.5" y="117" width="10" height="10" rx="2" fill="#ee6b34"/>
 <circle cx="122.5" cy="122" r="2.8" fill="none" stroke="#fff" stroke-width="1"/>
</svg>

<div class="abs" style="left:0;top:0;width:1px;height:655px;background:#8a8a8a;"></div>
<div class="abs" style="left:1027px;top:0;width:2px;height:655px;background:#b0b0b0;"></div>
<div class="abs" style="left:0;top:652px;width:317px;height:3px;background:#b4b4b4;"></div>
<div class="abs" style="left:317px;top:652px;width:712px;height:3px;background:#9c6560;"></div>

</body></html>
